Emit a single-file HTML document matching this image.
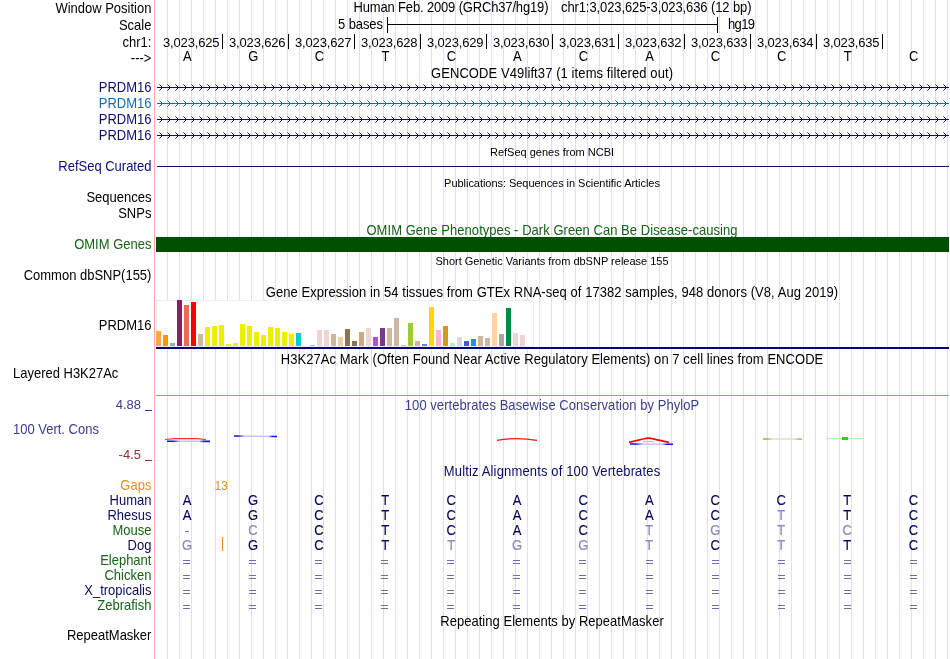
<!DOCTYPE html>
<html><head><meta charset="utf-8"><style>
html,body{margin:0;padding:0;background:#fff;}
body{width:950px;height:659px;overflow:hidden;}
svg{display:block;font-family:"Liberation Sans",sans-serif;will-change:transform;}
</style></head><body>
<svg width="950" height="659" viewBox="0 0 950 659">
<rect x="0" y="0" width="950" height="659" fill="#fff"/>
<rect x="167" y="0" width="1" height="659" fill="#ddddff"/>
<rect x="179" y="0" width="1" height="659" fill="#ddddff"/>
<rect x="191" y="0" width="1" height="659" fill="#ddddff"/>
<rect x="203" y="0" width="1" height="659" fill="#ddddff"/>
<rect x="215" y="0" width="1" height="659" fill="#ddddff"/>
<rect x="227" y="0" width="1" height="659" fill="#ddddff"/>
<rect x="239" y="0" width="1" height="659" fill="#ddddff"/>
<rect x="251" y="0" width="1" height="659" fill="#ddddff"/>
<rect x="263" y="0" width="1" height="659" fill="#ddddff"/>
<rect x="275" y="0" width="1" height="659" fill="#ddddff"/>
<rect x="287" y="0" width="1" height="659" fill="#ddddff"/>
<rect x="299" y="0" width="1" height="659" fill="#ddddff"/>
<rect x="311" y="0" width="1" height="659" fill="#ddddff"/>
<rect x="323" y="0" width="1" height="659" fill="#ddddff"/>
<rect x="335" y="0" width="1" height="659" fill="#ddddff"/>
<rect x="347" y="0" width="1" height="659" fill="#ddddff"/>
<rect x="359" y="0" width="1" height="659" fill="#ddddff"/>
<rect x="371" y="0" width="1" height="659" fill="#ddddff"/>
<rect x="383" y="0" width="1" height="659" fill="#ddddff"/>
<rect x="395" y="0" width="1" height="659" fill="#ddddff"/>
<rect x="407" y="0" width="1" height="659" fill="#ddddff"/>
<rect x="419" y="0" width="1" height="659" fill="#ddddff"/>
<rect x="431" y="0" width="1" height="659" fill="#ddddff"/>
<rect x="443" y="0" width="1" height="659" fill="#ddddff"/>
<rect x="455" y="0" width="1" height="659" fill="#ddddff"/>
<rect x="467" y="0" width="1" height="659" fill="#ddddff"/>
<rect x="479" y="0" width="1" height="659" fill="#ddddff"/>
<rect x="491" y="0" width="1" height="659" fill="#ddddff"/>
<rect x="503" y="0" width="1" height="659" fill="#ddddff"/>
<rect x="515" y="0" width="1" height="659" fill="#ddddff"/>
<rect x="527" y="0" width="1" height="659" fill="#ddddff"/>
<rect x="539" y="0" width="1" height="659" fill="#ddddff"/>
<rect x="551" y="0" width="1" height="659" fill="#ddddff"/>
<rect x="563" y="0" width="1" height="659" fill="#ddddff"/>
<rect x="575" y="0" width="1" height="659" fill="#ddddff"/>
<rect x="587" y="0" width="1" height="659" fill="#ddddff"/>
<rect x="599" y="0" width="1" height="659" fill="#ddddff"/>
<rect x="611" y="0" width="1" height="659" fill="#ddddff"/>
<rect x="623" y="0" width="1" height="659" fill="#ddddff"/>
<rect x="635" y="0" width="1" height="659" fill="#ddddff"/>
<rect x="647" y="0" width="1" height="659" fill="#ddddff"/>
<rect x="659" y="0" width="1" height="659" fill="#ddddff"/>
<rect x="671" y="0" width="1" height="659" fill="#ddddff"/>
<rect x="683" y="0" width="1" height="659" fill="#ddddff"/>
<rect x="695" y="0" width="1" height="659" fill="#ddddff"/>
<rect x="707" y="0" width="1" height="659" fill="#ddddff"/>
<rect x="719" y="0" width="1" height="659" fill="#ddddff"/>
<rect x="731" y="0" width="1" height="659" fill="#ddddff"/>
<rect x="743" y="0" width="1" height="659" fill="#ddddff"/>
<rect x="755" y="0" width="1" height="659" fill="#ddddff"/>
<rect x="767" y="0" width="1" height="659" fill="#ddddff"/>
<rect x="779" y="0" width="1" height="659" fill="#ddddff"/>
<rect x="791" y="0" width="1" height="659" fill="#ddddff"/>
<rect x="803" y="0" width="1" height="659" fill="#ddddff"/>
<rect x="815" y="0" width="1" height="659" fill="#ddddff"/>
<rect x="827" y="0" width="1" height="659" fill="#ddddff"/>
<rect x="839" y="0" width="1" height="659" fill="#ddddff"/>
<rect x="851" y="0" width="1" height="659" fill="#ddddff"/>
<rect x="863" y="0" width="1" height="659" fill="#ddddff"/>
<rect x="875" y="0" width="1" height="659" fill="#ddddff"/>
<rect x="887" y="0" width="1" height="659" fill="#ddddff"/>
<rect x="899" y="0" width="1" height="659" fill="#ddddff"/>
<rect x="911" y="0" width="1" height="659" fill="#ddddff"/>
<rect x="923" y="0" width="1" height="659" fill="#ddddff"/>
<rect x="935" y="0" width="1" height="659" fill="#ddddff"/>
<rect x="947" y="0" width="1" height="659" fill="#ddddff"/>
<rect x="154" y="0" width="1" height="659" fill="#ffaaaa"/>
<text transform="translate(151.4,13) scale(1,1.09)" text-anchor="end" font-size="13" fill="#000" xml:space="preserve">Window Position</text>
<text transform="translate(151.4,30) scale(1,1.09)" text-anchor="end" font-size="13" fill="#000" xml:space="preserve">Scale</text>
<text transform="translate(151.4,47) scale(1,1.09)" text-anchor="end" font-size="13" fill="#000" xml:space="preserve">chr1:</text>
<text transform="translate(151.4,63) scale(1,1.09)" text-anchor="end" font-size="13" fill="#000" xml:space="preserve">---&gt;</text>
<text transform="translate(353.5,12) scale(1,1.09)" text-anchor="start" font-size="13" fill="#000" textLength="195" lengthAdjust="spacing" xml:space="preserve">Human Feb. 2009 (GRCh37/hg19)</text>
<text transform="translate(561,12) scale(1,1.09)" text-anchor="start" font-size="13" fill="#000" textLength="190.5" lengthAdjust="spacing" xml:space="preserve">chr1:3,023,625-3,023,636 (12 bp)</text>
<text transform="translate(338,29) scale(1,1.09)" text-anchor="start" font-size="13" fill="#000" textLength="45" lengthAdjust="spacing" xml:space="preserve">5 bases</text>
<rect x="387" y="24" width="331" height="1" fill="#000"/>
<rect x="387" y="17" width="1" height="16" fill="#000"/>
<rect x="717" y="17" width="1" height="16" fill="#000"/>
<text transform="translate(728,29) scale(1,1.09)" text-anchor="start" font-size="13" fill="#000" textLength="27" lengthAdjust="spacing" xml:space="preserve">hg19</text>
<rect x="222" y="34" width="1" height="15" fill="#000"/>
<text transform="translate(219.5,47) scale(1,1.0)" text-anchor="end" font-size="13" fill="#000" textLength="56.5" lengthAdjust="spacing" xml:space="preserve">3,023,625</text>
<text transform="translate(187.3,61) scale(1,1.09)" text-anchor="middle" font-size="13" fill="#000" xml:space="preserve">A</text>
<rect x="288" y="34" width="1" height="15" fill="#000"/>
<text transform="translate(285.5,47) scale(1,1.0)" text-anchor="end" font-size="13" fill="#000" textLength="56.5" lengthAdjust="spacing" xml:space="preserve">3,023,626</text>
<text transform="translate(253.33,61) scale(1,1.09)" text-anchor="middle" font-size="13" fill="#000" xml:space="preserve">G</text>
<rect x="354" y="34" width="1" height="15" fill="#000"/>
<text transform="translate(351.5,47) scale(1,1.0)" text-anchor="end" font-size="13" fill="#000" textLength="56.5" lengthAdjust="spacing" xml:space="preserve">3,023,627</text>
<text transform="translate(319.36,61) scale(1,1.09)" text-anchor="middle" font-size="13" fill="#000" xml:space="preserve">C</text>
<rect x="420" y="34" width="1" height="15" fill="#000"/>
<text transform="translate(417.5,47) scale(1,1.0)" text-anchor="end" font-size="13" fill="#000" textLength="56.5" lengthAdjust="spacing" xml:space="preserve">3,023,628</text>
<text transform="translate(385.39,61) scale(1,1.09)" text-anchor="middle" font-size="13" fill="#000" xml:space="preserve">T</text>
<rect x="486" y="34" width="1" height="15" fill="#000"/>
<text transform="translate(483.5,47) scale(1,1.0)" text-anchor="end" font-size="13" fill="#000" textLength="56.5" lengthAdjust="spacing" xml:space="preserve">3,023,629</text>
<text transform="translate(451.42,61) scale(1,1.09)" text-anchor="middle" font-size="13" fill="#000" xml:space="preserve">C</text>
<rect x="552" y="34" width="1" height="15" fill="#000"/>
<text transform="translate(549.5,47) scale(1,1.0)" text-anchor="end" font-size="13" fill="#000" textLength="56.5" lengthAdjust="spacing" xml:space="preserve">3,023,630</text>
<text transform="translate(517.45,61) scale(1,1.09)" text-anchor="middle" font-size="13" fill="#000" xml:space="preserve">A</text>
<rect x="618" y="34" width="1" height="15" fill="#000"/>
<text transform="translate(615.5,47) scale(1,1.0)" text-anchor="end" font-size="13" fill="#000" textLength="56.5" lengthAdjust="spacing" xml:space="preserve">3,023,631</text>
<text transform="translate(583.48,61) scale(1,1.09)" text-anchor="middle" font-size="13" fill="#000" xml:space="preserve">C</text>
<rect x="684" y="34" width="1" height="15" fill="#000"/>
<text transform="translate(681.5,47) scale(1,1.0)" text-anchor="end" font-size="13" fill="#000" textLength="56.5" lengthAdjust="spacing" xml:space="preserve">3,023,632</text>
<text transform="translate(649.51,61) scale(1,1.09)" text-anchor="middle" font-size="13" fill="#000" xml:space="preserve">A</text>
<rect x="750" y="34" width="1" height="15" fill="#000"/>
<text transform="translate(747.5,47) scale(1,1.0)" text-anchor="end" font-size="13" fill="#000" textLength="56.5" lengthAdjust="spacing" xml:space="preserve">3,023,633</text>
<text transform="translate(715.54,61) scale(1,1.09)" text-anchor="middle" font-size="13" fill="#000" xml:space="preserve">C</text>
<rect x="816" y="34" width="1" height="15" fill="#000"/>
<text transform="translate(813.5,47) scale(1,1.0)" text-anchor="end" font-size="13" fill="#000" textLength="56.5" lengthAdjust="spacing" xml:space="preserve">3,023,634</text>
<text transform="translate(781.5699999999999,61) scale(1,1.09)" text-anchor="middle" font-size="13" fill="#000" xml:space="preserve">C</text>
<rect x="882" y="34" width="1" height="15" fill="#000"/>
<text transform="translate(879.5,47) scale(1,1.0)" text-anchor="end" font-size="13" fill="#000" textLength="56.5" lengthAdjust="spacing" xml:space="preserve">3,023,635</text>
<text transform="translate(847.5999999999999,61) scale(1,1.09)" text-anchor="middle" font-size="13" fill="#000" xml:space="preserve">T</text>
<text transform="translate(913.6300000000001,61) scale(1,1.09)" text-anchor="middle" font-size="13" fill="#000" xml:space="preserve">C</text>
<text transform="translate(552,78) scale(1,1.09)" text-anchor="middle" font-size="13" fill="#000" textLength="242.1" lengthAdjust="spacing" xml:space="preserve">GENCODE V49lift37 (1 items filtered out)</text>
<text transform="translate(151.4,92) scale(1,1.09)" text-anchor="end" font-size="13" fill="#0c0c78" xml:space="preserve">PRDM16</text>
<rect x="157" y="87" width="792" height="1" fill="#0c0c78"/>
<path d="M160,85h1v1h-1zM161,86h1v3h-1zM160,89h1v1h-1zM168,85h1v1h-1zM169,86h1v3h-1zM168,89h1v1h-1zM176,85h1v1h-1zM177,86h1v3h-1zM176,89h1v1h-1zM184,85h1v1h-1zM185,86h1v3h-1zM184,89h1v1h-1zM192,85h1v1h-1zM193,86h1v3h-1zM192,89h1v1h-1zM200,85h1v1h-1zM201,86h1v3h-1zM200,89h1v1h-1zM208,85h1v1h-1zM209,86h1v3h-1zM208,89h1v1h-1zM216,85h1v1h-1zM217,86h1v3h-1zM216,89h1v1h-1zM224,85h1v1h-1zM225,86h1v3h-1zM224,89h1v1h-1zM232,85h1v1h-1zM233,86h1v3h-1zM232,89h1v1h-1zM240,85h1v1h-1zM241,86h1v3h-1zM240,89h1v1h-1zM248,85h1v1h-1zM249,86h1v3h-1zM248,89h1v1h-1zM256,85h1v1h-1zM257,86h1v3h-1zM256,89h1v1h-1zM264,85h1v1h-1zM265,86h1v3h-1zM264,89h1v1h-1zM272,85h1v1h-1zM273,86h1v3h-1zM272,89h1v1h-1zM280,85h1v1h-1zM281,86h1v3h-1zM280,89h1v1h-1zM288,85h1v1h-1zM289,86h1v3h-1zM288,89h1v1h-1zM296,85h1v1h-1zM297,86h1v3h-1zM296,89h1v1h-1zM304,85h1v1h-1zM305,86h1v3h-1zM304,89h1v1h-1zM312,85h1v1h-1zM313,86h1v3h-1zM312,89h1v1h-1zM320,85h1v1h-1zM321,86h1v3h-1zM320,89h1v1h-1zM328,85h1v1h-1zM329,86h1v3h-1zM328,89h1v1h-1zM336,85h1v1h-1zM337,86h1v3h-1zM336,89h1v1h-1zM344,85h1v1h-1zM345,86h1v3h-1zM344,89h1v1h-1zM352,85h1v1h-1zM353,86h1v3h-1zM352,89h1v1h-1zM360,85h1v1h-1zM361,86h1v3h-1zM360,89h1v1h-1zM368,85h1v1h-1zM369,86h1v3h-1zM368,89h1v1h-1zM376,85h1v1h-1zM377,86h1v3h-1zM376,89h1v1h-1zM384,85h1v1h-1zM385,86h1v3h-1zM384,89h1v1h-1zM392,85h1v1h-1zM393,86h1v3h-1zM392,89h1v1h-1zM400,85h1v1h-1zM401,86h1v3h-1zM400,89h1v1h-1zM408,85h1v1h-1zM409,86h1v3h-1zM408,89h1v1h-1zM416,85h1v1h-1zM417,86h1v3h-1zM416,89h1v1h-1zM424,85h1v1h-1zM425,86h1v3h-1zM424,89h1v1h-1zM432,85h1v1h-1zM433,86h1v3h-1zM432,89h1v1h-1zM440,85h1v1h-1zM441,86h1v3h-1zM440,89h1v1h-1zM448,85h1v1h-1zM449,86h1v3h-1zM448,89h1v1h-1zM456,85h1v1h-1zM457,86h1v3h-1zM456,89h1v1h-1zM464,85h1v1h-1zM465,86h1v3h-1zM464,89h1v1h-1zM472,85h1v1h-1zM473,86h1v3h-1zM472,89h1v1h-1zM480,85h1v1h-1zM481,86h1v3h-1zM480,89h1v1h-1zM488,85h1v1h-1zM489,86h1v3h-1zM488,89h1v1h-1zM496,85h1v1h-1zM497,86h1v3h-1zM496,89h1v1h-1zM504,85h1v1h-1zM505,86h1v3h-1zM504,89h1v1h-1zM512,85h1v1h-1zM513,86h1v3h-1zM512,89h1v1h-1zM520,85h1v1h-1zM521,86h1v3h-1zM520,89h1v1h-1zM528,85h1v1h-1zM529,86h1v3h-1zM528,89h1v1h-1zM536,85h1v1h-1zM537,86h1v3h-1zM536,89h1v1h-1zM544,85h1v1h-1zM545,86h1v3h-1zM544,89h1v1h-1zM552,85h1v1h-1zM553,86h1v3h-1zM552,89h1v1h-1zM560,85h1v1h-1zM561,86h1v3h-1zM560,89h1v1h-1zM568,85h1v1h-1zM569,86h1v3h-1zM568,89h1v1h-1zM576,85h1v1h-1zM577,86h1v3h-1zM576,89h1v1h-1zM584,85h1v1h-1zM585,86h1v3h-1zM584,89h1v1h-1zM592,85h1v1h-1zM593,86h1v3h-1zM592,89h1v1h-1zM600,85h1v1h-1zM601,86h1v3h-1zM600,89h1v1h-1zM608,85h1v1h-1zM609,86h1v3h-1zM608,89h1v1h-1zM616,85h1v1h-1zM617,86h1v3h-1zM616,89h1v1h-1zM624,85h1v1h-1zM625,86h1v3h-1zM624,89h1v1h-1zM632,85h1v1h-1zM633,86h1v3h-1zM632,89h1v1h-1zM640,85h1v1h-1zM641,86h1v3h-1zM640,89h1v1h-1zM648,85h1v1h-1zM649,86h1v3h-1zM648,89h1v1h-1zM656,85h1v1h-1zM657,86h1v3h-1zM656,89h1v1h-1zM664,85h1v1h-1zM665,86h1v3h-1zM664,89h1v1h-1zM672,85h1v1h-1zM673,86h1v3h-1zM672,89h1v1h-1zM680,85h1v1h-1zM681,86h1v3h-1zM680,89h1v1h-1zM688,85h1v1h-1zM689,86h1v3h-1zM688,89h1v1h-1zM696,85h1v1h-1zM697,86h1v3h-1zM696,89h1v1h-1zM704,85h1v1h-1zM705,86h1v3h-1zM704,89h1v1h-1zM712,85h1v1h-1zM713,86h1v3h-1zM712,89h1v1h-1zM720,85h1v1h-1zM721,86h1v3h-1zM720,89h1v1h-1zM728,85h1v1h-1zM729,86h1v3h-1zM728,89h1v1h-1zM736,85h1v1h-1zM737,86h1v3h-1zM736,89h1v1h-1zM744,85h1v1h-1zM745,86h1v3h-1zM744,89h1v1h-1zM752,85h1v1h-1zM753,86h1v3h-1zM752,89h1v1h-1zM760,85h1v1h-1zM761,86h1v3h-1zM760,89h1v1h-1zM768,85h1v1h-1zM769,86h1v3h-1zM768,89h1v1h-1zM776,85h1v1h-1zM777,86h1v3h-1zM776,89h1v1h-1zM784,85h1v1h-1zM785,86h1v3h-1zM784,89h1v1h-1zM792,85h1v1h-1zM793,86h1v3h-1zM792,89h1v1h-1zM800,85h1v1h-1zM801,86h1v3h-1zM800,89h1v1h-1zM808,85h1v1h-1zM809,86h1v3h-1zM808,89h1v1h-1zM816,85h1v1h-1zM817,86h1v3h-1zM816,89h1v1h-1zM824,85h1v1h-1zM825,86h1v3h-1zM824,89h1v1h-1zM832,85h1v1h-1zM833,86h1v3h-1zM832,89h1v1h-1zM840,85h1v1h-1zM841,86h1v3h-1zM840,89h1v1h-1zM848,85h1v1h-1zM849,86h1v3h-1zM848,89h1v1h-1zM856,85h1v1h-1zM857,86h1v3h-1zM856,89h1v1h-1zM864,85h1v1h-1zM865,86h1v3h-1zM864,89h1v1h-1zM872,85h1v1h-1zM873,86h1v3h-1zM872,89h1v1h-1zM880,85h1v1h-1zM881,86h1v3h-1zM880,89h1v1h-1zM888,85h1v1h-1zM889,86h1v3h-1zM888,89h1v1h-1zM896,85h1v1h-1zM897,86h1v3h-1zM896,89h1v1h-1zM904,85h1v1h-1zM905,86h1v3h-1zM904,89h1v1h-1zM912,85h1v1h-1zM913,86h1v3h-1zM912,89h1v1h-1zM920,85h1v1h-1zM921,86h1v3h-1zM920,89h1v1h-1zM928,85h1v1h-1zM929,86h1v3h-1zM928,89h1v1h-1zM936,85h1v1h-1zM937,86h1v3h-1zM936,89h1v1h-1zM944,85h1v1h-1zM945,86h1v3h-1zM944,89h1v1h-1z" fill="#0c0c78"/>
<path d="M159,84h1v1h-1zM159,90h1v1h-1zM167,84h1v1h-1zM167,90h1v1h-1zM175,84h1v1h-1zM175,90h1v1h-1zM183,84h1v1h-1zM183,90h1v1h-1zM191,84h1v1h-1zM191,90h1v1h-1zM199,84h1v1h-1zM199,90h1v1h-1zM207,84h1v1h-1zM207,90h1v1h-1zM215,84h1v1h-1zM215,90h1v1h-1zM223,84h1v1h-1zM223,90h1v1h-1zM231,84h1v1h-1zM231,90h1v1h-1zM239,84h1v1h-1zM239,90h1v1h-1zM247,84h1v1h-1zM247,90h1v1h-1zM255,84h1v1h-1zM255,90h1v1h-1zM263,84h1v1h-1zM263,90h1v1h-1zM271,84h1v1h-1zM271,90h1v1h-1zM279,84h1v1h-1zM279,90h1v1h-1zM287,84h1v1h-1zM287,90h1v1h-1zM295,84h1v1h-1zM295,90h1v1h-1zM303,84h1v1h-1zM303,90h1v1h-1zM311,84h1v1h-1zM311,90h1v1h-1zM319,84h1v1h-1zM319,90h1v1h-1zM327,84h1v1h-1zM327,90h1v1h-1zM335,84h1v1h-1zM335,90h1v1h-1zM343,84h1v1h-1zM343,90h1v1h-1zM351,84h1v1h-1zM351,90h1v1h-1zM359,84h1v1h-1zM359,90h1v1h-1zM367,84h1v1h-1zM367,90h1v1h-1zM375,84h1v1h-1zM375,90h1v1h-1zM383,84h1v1h-1zM383,90h1v1h-1zM391,84h1v1h-1zM391,90h1v1h-1zM399,84h1v1h-1zM399,90h1v1h-1zM407,84h1v1h-1zM407,90h1v1h-1zM415,84h1v1h-1zM415,90h1v1h-1zM423,84h1v1h-1zM423,90h1v1h-1zM431,84h1v1h-1zM431,90h1v1h-1zM439,84h1v1h-1zM439,90h1v1h-1zM447,84h1v1h-1zM447,90h1v1h-1zM455,84h1v1h-1zM455,90h1v1h-1zM463,84h1v1h-1zM463,90h1v1h-1zM471,84h1v1h-1zM471,90h1v1h-1zM479,84h1v1h-1zM479,90h1v1h-1zM487,84h1v1h-1zM487,90h1v1h-1zM495,84h1v1h-1zM495,90h1v1h-1zM503,84h1v1h-1zM503,90h1v1h-1zM511,84h1v1h-1zM511,90h1v1h-1zM519,84h1v1h-1zM519,90h1v1h-1zM527,84h1v1h-1zM527,90h1v1h-1zM535,84h1v1h-1zM535,90h1v1h-1zM543,84h1v1h-1zM543,90h1v1h-1zM551,84h1v1h-1zM551,90h1v1h-1zM559,84h1v1h-1zM559,90h1v1h-1zM567,84h1v1h-1zM567,90h1v1h-1zM575,84h1v1h-1zM575,90h1v1h-1zM583,84h1v1h-1zM583,90h1v1h-1zM591,84h1v1h-1zM591,90h1v1h-1zM599,84h1v1h-1zM599,90h1v1h-1zM607,84h1v1h-1zM607,90h1v1h-1zM615,84h1v1h-1zM615,90h1v1h-1zM623,84h1v1h-1zM623,90h1v1h-1zM631,84h1v1h-1zM631,90h1v1h-1zM639,84h1v1h-1zM639,90h1v1h-1zM647,84h1v1h-1zM647,90h1v1h-1zM655,84h1v1h-1zM655,90h1v1h-1zM663,84h1v1h-1zM663,90h1v1h-1zM671,84h1v1h-1zM671,90h1v1h-1zM679,84h1v1h-1zM679,90h1v1h-1zM687,84h1v1h-1zM687,90h1v1h-1zM695,84h1v1h-1zM695,90h1v1h-1zM703,84h1v1h-1zM703,90h1v1h-1zM711,84h1v1h-1zM711,90h1v1h-1zM719,84h1v1h-1zM719,90h1v1h-1zM727,84h1v1h-1zM727,90h1v1h-1zM735,84h1v1h-1zM735,90h1v1h-1zM743,84h1v1h-1zM743,90h1v1h-1zM751,84h1v1h-1zM751,90h1v1h-1zM759,84h1v1h-1zM759,90h1v1h-1zM767,84h1v1h-1zM767,90h1v1h-1zM775,84h1v1h-1zM775,90h1v1h-1zM783,84h1v1h-1zM783,90h1v1h-1zM791,84h1v1h-1zM791,90h1v1h-1zM799,84h1v1h-1zM799,90h1v1h-1zM807,84h1v1h-1zM807,90h1v1h-1zM815,84h1v1h-1zM815,90h1v1h-1zM823,84h1v1h-1zM823,90h1v1h-1zM831,84h1v1h-1zM831,90h1v1h-1zM839,84h1v1h-1zM839,90h1v1h-1zM847,84h1v1h-1zM847,90h1v1h-1zM855,84h1v1h-1zM855,90h1v1h-1zM863,84h1v1h-1zM863,90h1v1h-1zM871,84h1v1h-1zM871,90h1v1h-1zM879,84h1v1h-1zM879,90h1v1h-1zM887,84h1v1h-1zM887,90h1v1h-1zM895,84h1v1h-1zM895,90h1v1h-1zM903,84h1v1h-1zM903,90h1v1h-1zM911,84h1v1h-1zM911,90h1v1h-1zM919,84h1v1h-1zM919,90h1v1h-1zM927,84h1v1h-1zM927,90h1v1h-1zM935,84h1v1h-1zM935,90h1v1h-1zM943,84h1v1h-1zM943,90h1v1h-1z" fill="#0c0c78" fill-opacity="0.6"/>
<text transform="translate(151.4,108) scale(1,1.09)" text-anchor="end" font-size="13" fill="#0c6eb4" xml:space="preserve">PRDM16</text>
<rect x="157" y="103" width="792" height="1" fill="#0c6eb4"/>
<path d="M160,101h1v1h-1zM161,102h1v3h-1zM160,105h1v1h-1zM168,101h1v1h-1zM169,102h1v3h-1zM168,105h1v1h-1zM176,101h1v1h-1zM177,102h1v3h-1zM176,105h1v1h-1zM184,101h1v1h-1zM185,102h1v3h-1zM184,105h1v1h-1zM192,101h1v1h-1zM193,102h1v3h-1zM192,105h1v1h-1zM200,101h1v1h-1zM201,102h1v3h-1zM200,105h1v1h-1zM208,101h1v1h-1zM209,102h1v3h-1zM208,105h1v1h-1zM216,101h1v1h-1zM217,102h1v3h-1zM216,105h1v1h-1zM224,101h1v1h-1zM225,102h1v3h-1zM224,105h1v1h-1zM232,101h1v1h-1zM233,102h1v3h-1zM232,105h1v1h-1zM240,101h1v1h-1zM241,102h1v3h-1zM240,105h1v1h-1zM248,101h1v1h-1zM249,102h1v3h-1zM248,105h1v1h-1zM256,101h1v1h-1zM257,102h1v3h-1zM256,105h1v1h-1zM264,101h1v1h-1zM265,102h1v3h-1zM264,105h1v1h-1zM272,101h1v1h-1zM273,102h1v3h-1zM272,105h1v1h-1zM280,101h1v1h-1zM281,102h1v3h-1zM280,105h1v1h-1zM288,101h1v1h-1zM289,102h1v3h-1zM288,105h1v1h-1zM296,101h1v1h-1zM297,102h1v3h-1zM296,105h1v1h-1zM304,101h1v1h-1zM305,102h1v3h-1zM304,105h1v1h-1zM312,101h1v1h-1zM313,102h1v3h-1zM312,105h1v1h-1zM320,101h1v1h-1zM321,102h1v3h-1zM320,105h1v1h-1zM328,101h1v1h-1zM329,102h1v3h-1zM328,105h1v1h-1zM336,101h1v1h-1zM337,102h1v3h-1zM336,105h1v1h-1zM344,101h1v1h-1zM345,102h1v3h-1zM344,105h1v1h-1zM352,101h1v1h-1zM353,102h1v3h-1zM352,105h1v1h-1zM360,101h1v1h-1zM361,102h1v3h-1zM360,105h1v1h-1zM368,101h1v1h-1zM369,102h1v3h-1zM368,105h1v1h-1zM376,101h1v1h-1zM377,102h1v3h-1zM376,105h1v1h-1zM384,101h1v1h-1zM385,102h1v3h-1zM384,105h1v1h-1zM392,101h1v1h-1zM393,102h1v3h-1zM392,105h1v1h-1zM400,101h1v1h-1zM401,102h1v3h-1zM400,105h1v1h-1zM408,101h1v1h-1zM409,102h1v3h-1zM408,105h1v1h-1zM416,101h1v1h-1zM417,102h1v3h-1zM416,105h1v1h-1zM424,101h1v1h-1zM425,102h1v3h-1zM424,105h1v1h-1zM432,101h1v1h-1zM433,102h1v3h-1zM432,105h1v1h-1zM440,101h1v1h-1zM441,102h1v3h-1zM440,105h1v1h-1zM448,101h1v1h-1zM449,102h1v3h-1zM448,105h1v1h-1zM456,101h1v1h-1zM457,102h1v3h-1zM456,105h1v1h-1zM464,101h1v1h-1zM465,102h1v3h-1zM464,105h1v1h-1zM472,101h1v1h-1zM473,102h1v3h-1zM472,105h1v1h-1zM480,101h1v1h-1zM481,102h1v3h-1zM480,105h1v1h-1zM488,101h1v1h-1zM489,102h1v3h-1zM488,105h1v1h-1zM496,101h1v1h-1zM497,102h1v3h-1zM496,105h1v1h-1zM504,101h1v1h-1zM505,102h1v3h-1zM504,105h1v1h-1zM512,101h1v1h-1zM513,102h1v3h-1zM512,105h1v1h-1zM520,101h1v1h-1zM521,102h1v3h-1zM520,105h1v1h-1zM528,101h1v1h-1zM529,102h1v3h-1zM528,105h1v1h-1zM536,101h1v1h-1zM537,102h1v3h-1zM536,105h1v1h-1zM544,101h1v1h-1zM545,102h1v3h-1zM544,105h1v1h-1zM552,101h1v1h-1zM553,102h1v3h-1zM552,105h1v1h-1zM560,101h1v1h-1zM561,102h1v3h-1zM560,105h1v1h-1zM568,101h1v1h-1zM569,102h1v3h-1zM568,105h1v1h-1zM576,101h1v1h-1zM577,102h1v3h-1zM576,105h1v1h-1zM584,101h1v1h-1zM585,102h1v3h-1zM584,105h1v1h-1zM592,101h1v1h-1zM593,102h1v3h-1zM592,105h1v1h-1zM600,101h1v1h-1zM601,102h1v3h-1zM600,105h1v1h-1zM608,101h1v1h-1zM609,102h1v3h-1zM608,105h1v1h-1zM616,101h1v1h-1zM617,102h1v3h-1zM616,105h1v1h-1zM624,101h1v1h-1zM625,102h1v3h-1zM624,105h1v1h-1zM632,101h1v1h-1zM633,102h1v3h-1zM632,105h1v1h-1zM640,101h1v1h-1zM641,102h1v3h-1zM640,105h1v1h-1zM648,101h1v1h-1zM649,102h1v3h-1zM648,105h1v1h-1zM656,101h1v1h-1zM657,102h1v3h-1zM656,105h1v1h-1zM664,101h1v1h-1zM665,102h1v3h-1zM664,105h1v1h-1zM672,101h1v1h-1zM673,102h1v3h-1zM672,105h1v1h-1zM680,101h1v1h-1zM681,102h1v3h-1zM680,105h1v1h-1zM688,101h1v1h-1zM689,102h1v3h-1zM688,105h1v1h-1zM696,101h1v1h-1zM697,102h1v3h-1zM696,105h1v1h-1zM704,101h1v1h-1zM705,102h1v3h-1zM704,105h1v1h-1zM712,101h1v1h-1zM713,102h1v3h-1zM712,105h1v1h-1zM720,101h1v1h-1zM721,102h1v3h-1zM720,105h1v1h-1zM728,101h1v1h-1zM729,102h1v3h-1zM728,105h1v1h-1zM736,101h1v1h-1zM737,102h1v3h-1zM736,105h1v1h-1zM744,101h1v1h-1zM745,102h1v3h-1zM744,105h1v1h-1zM752,101h1v1h-1zM753,102h1v3h-1zM752,105h1v1h-1zM760,101h1v1h-1zM761,102h1v3h-1zM760,105h1v1h-1zM768,101h1v1h-1zM769,102h1v3h-1zM768,105h1v1h-1zM776,101h1v1h-1zM777,102h1v3h-1zM776,105h1v1h-1zM784,101h1v1h-1zM785,102h1v3h-1zM784,105h1v1h-1zM792,101h1v1h-1zM793,102h1v3h-1zM792,105h1v1h-1zM800,101h1v1h-1zM801,102h1v3h-1zM800,105h1v1h-1zM808,101h1v1h-1zM809,102h1v3h-1zM808,105h1v1h-1zM816,101h1v1h-1zM817,102h1v3h-1zM816,105h1v1h-1zM824,101h1v1h-1zM825,102h1v3h-1zM824,105h1v1h-1zM832,101h1v1h-1zM833,102h1v3h-1zM832,105h1v1h-1zM840,101h1v1h-1zM841,102h1v3h-1zM840,105h1v1h-1zM848,101h1v1h-1zM849,102h1v3h-1zM848,105h1v1h-1zM856,101h1v1h-1zM857,102h1v3h-1zM856,105h1v1h-1zM864,101h1v1h-1zM865,102h1v3h-1zM864,105h1v1h-1zM872,101h1v1h-1zM873,102h1v3h-1zM872,105h1v1h-1zM880,101h1v1h-1zM881,102h1v3h-1zM880,105h1v1h-1zM888,101h1v1h-1zM889,102h1v3h-1zM888,105h1v1h-1zM896,101h1v1h-1zM897,102h1v3h-1zM896,105h1v1h-1zM904,101h1v1h-1zM905,102h1v3h-1zM904,105h1v1h-1zM912,101h1v1h-1zM913,102h1v3h-1zM912,105h1v1h-1zM920,101h1v1h-1zM921,102h1v3h-1zM920,105h1v1h-1zM928,101h1v1h-1zM929,102h1v3h-1zM928,105h1v1h-1zM936,101h1v1h-1zM937,102h1v3h-1zM936,105h1v1h-1zM944,101h1v1h-1zM945,102h1v3h-1zM944,105h1v1h-1z" fill="#0c6eb4"/>
<path d="M159,100h1v1h-1zM159,106h1v1h-1zM167,100h1v1h-1zM167,106h1v1h-1zM175,100h1v1h-1zM175,106h1v1h-1zM183,100h1v1h-1zM183,106h1v1h-1zM191,100h1v1h-1zM191,106h1v1h-1zM199,100h1v1h-1zM199,106h1v1h-1zM207,100h1v1h-1zM207,106h1v1h-1zM215,100h1v1h-1zM215,106h1v1h-1zM223,100h1v1h-1zM223,106h1v1h-1zM231,100h1v1h-1zM231,106h1v1h-1zM239,100h1v1h-1zM239,106h1v1h-1zM247,100h1v1h-1zM247,106h1v1h-1zM255,100h1v1h-1zM255,106h1v1h-1zM263,100h1v1h-1zM263,106h1v1h-1zM271,100h1v1h-1zM271,106h1v1h-1zM279,100h1v1h-1zM279,106h1v1h-1zM287,100h1v1h-1zM287,106h1v1h-1zM295,100h1v1h-1zM295,106h1v1h-1zM303,100h1v1h-1zM303,106h1v1h-1zM311,100h1v1h-1zM311,106h1v1h-1zM319,100h1v1h-1zM319,106h1v1h-1zM327,100h1v1h-1zM327,106h1v1h-1zM335,100h1v1h-1zM335,106h1v1h-1zM343,100h1v1h-1zM343,106h1v1h-1zM351,100h1v1h-1zM351,106h1v1h-1zM359,100h1v1h-1zM359,106h1v1h-1zM367,100h1v1h-1zM367,106h1v1h-1zM375,100h1v1h-1zM375,106h1v1h-1zM383,100h1v1h-1zM383,106h1v1h-1zM391,100h1v1h-1zM391,106h1v1h-1zM399,100h1v1h-1zM399,106h1v1h-1zM407,100h1v1h-1zM407,106h1v1h-1zM415,100h1v1h-1zM415,106h1v1h-1zM423,100h1v1h-1zM423,106h1v1h-1zM431,100h1v1h-1zM431,106h1v1h-1zM439,100h1v1h-1zM439,106h1v1h-1zM447,100h1v1h-1zM447,106h1v1h-1zM455,100h1v1h-1zM455,106h1v1h-1zM463,100h1v1h-1zM463,106h1v1h-1zM471,100h1v1h-1zM471,106h1v1h-1zM479,100h1v1h-1zM479,106h1v1h-1zM487,100h1v1h-1zM487,106h1v1h-1zM495,100h1v1h-1zM495,106h1v1h-1zM503,100h1v1h-1zM503,106h1v1h-1zM511,100h1v1h-1zM511,106h1v1h-1zM519,100h1v1h-1zM519,106h1v1h-1zM527,100h1v1h-1zM527,106h1v1h-1zM535,100h1v1h-1zM535,106h1v1h-1zM543,100h1v1h-1zM543,106h1v1h-1zM551,100h1v1h-1zM551,106h1v1h-1zM559,100h1v1h-1zM559,106h1v1h-1zM567,100h1v1h-1zM567,106h1v1h-1zM575,100h1v1h-1zM575,106h1v1h-1zM583,100h1v1h-1zM583,106h1v1h-1zM591,100h1v1h-1zM591,106h1v1h-1zM599,100h1v1h-1zM599,106h1v1h-1zM607,100h1v1h-1zM607,106h1v1h-1zM615,100h1v1h-1zM615,106h1v1h-1zM623,100h1v1h-1zM623,106h1v1h-1zM631,100h1v1h-1zM631,106h1v1h-1zM639,100h1v1h-1zM639,106h1v1h-1zM647,100h1v1h-1zM647,106h1v1h-1zM655,100h1v1h-1zM655,106h1v1h-1zM663,100h1v1h-1zM663,106h1v1h-1zM671,100h1v1h-1zM671,106h1v1h-1zM679,100h1v1h-1zM679,106h1v1h-1zM687,100h1v1h-1zM687,106h1v1h-1zM695,100h1v1h-1zM695,106h1v1h-1zM703,100h1v1h-1zM703,106h1v1h-1zM711,100h1v1h-1zM711,106h1v1h-1zM719,100h1v1h-1zM719,106h1v1h-1zM727,100h1v1h-1zM727,106h1v1h-1zM735,100h1v1h-1zM735,106h1v1h-1zM743,100h1v1h-1zM743,106h1v1h-1zM751,100h1v1h-1zM751,106h1v1h-1zM759,100h1v1h-1zM759,106h1v1h-1zM767,100h1v1h-1zM767,106h1v1h-1zM775,100h1v1h-1zM775,106h1v1h-1zM783,100h1v1h-1zM783,106h1v1h-1zM791,100h1v1h-1zM791,106h1v1h-1zM799,100h1v1h-1zM799,106h1v1h-1zM807,100h1v1h-1zM807,106h1v1h-1zM815,100h1v1h-1zM815,106h1v1h-1zM823,100h1v1h-1zM823,106h1v1h-1zM831,100h1v1h-1zM831,106h1v1h-1zM839,100h1v1h-1zM839,106h1v1h-1zM847,100h1v1h-1zM847,106h1v1h-1zM855,100h1v1h-1zM855,106h1v1h-1zM863,100h1v1h-1zM863,106h1v1h-1zM871,100h1v1h-1zM871,106h1v1h-1zM879,100h1v1h-1zM879,106h1v1h-1zM887,100h1v1h-1zM887,106h1v1h-1zM895,100h1v1h-1zM895,106h1v1h-1zM903,100h1v1h-1zM903,106h1v1h-1zM911,100h1v1h-1zM911,106h1v1h-1zM919,100h1v1h-1zM919,106h1v1h-1zM927,100h1v1h-1zM927,106h1v1h-1zM935,100h1v1h-1zM935,106h1v1h-1zM943,100h1v1h-1zM943,106h1v1h-1z" fill="#0c6eb4" fill-opacity="0.6"/>
<text transform="translate(151.4,124) scale(1,1.09)" text-anchor="end" font-size="13" fill="#0c0c78" xml:space="preserve">PRDM16</text>
<rect x="157" y="119" width="792" height="1" fill="#0c0c78"/>
<path d="M160,117h1v1h-1zM161,118h1v3h-1zM160,121h1v1h-1zM168,117h1v1h-1zM169,118h1v3h-1zM168,121h1v1h-1zM176,117h1v1h-1zM177,118h1v3h-1zM176,121h1v1h-1zM184,117h1v1h-1zM185,118h1v3h-1zM184,121h1v1h-1zM192,117h1v1h-1zM193,118h1v3h-1zM192,121h1v1h-1zM200,117h1v1h-1zM201,118h1v3h-1zM200,121h1v1h-1zM208,117h1v1h-1zM209,118h1v3h-1zM208,121h1v1h-1zM216,117h1v1h-1zM217,118h1v3h-1zM216,121h1v1h-1zM224,117h1v1h-1zM225,118h1v3h-1zM224,121h1v1h-1zM232,117h1v1h-1zM233,118h1v3h-1zM232,121h1v1h-1zM240,117h1v1h-1zM241,118h1v3h-1zM240,121h1v1h-1zM248,117h1v1h-1zM249,118h1v3h-1zM248,121h1v1h-1zM256,117h1v1h-1zM257,118h1v3h-1zM256,121h1v1h-1zM264,117h1v1h-1zM265,118h1v3h-1zM264,121h1v1h-1zM272,117h1v1h-1zM273,118h1v3h-1zM272,121h1v1h-1zM280,117h1v1h-1zM281,118h1v3h-1zM280,121h1v1h-1zM288,117h1v1h-1zM289,118h1v3h-1zM288,121h1v1h-1zM296,117h1v1h-1zM297,118h1v3h-1zM296,121h1v1h-1zM304,117h1v1h-1zM305,118h1v3h-1zM304,121h1v1h-1zM312,117h1v1h-1zM313,118h1v3h-1zM312,121h1v1h-1zM320,117h1v1h-1zM321,118h1v3h-1zM320,121h1v1h-1zM328,117h1v1h-1zM329,118h1v3h-1zM328,121h1v1h-1zM336,117h1v1h-1zM337,118h1v3h-1zM336,121h1v1h-1zM344,117h1v1h-1zM345,118h1v3h-1zM344,121h1v1h-1zM352,117h1v1h-1zM353,118h1v3h-1zM352,121h1v1h-1zM360,117h1v1h-1zM361,118h1v3h-1zM360,121h1v1h-1zM368,117h1v1h-1zM369,118h1v3h-1zM368,121h1v1h-1zM376,117h1v1h-1zM377,118h1v3h-1zM376,121h1v1h-1zM384,117h1v1h-1zM385,118h1v3h-1zM384,121h1v1h-1zM392,117h1v1h-1zM393,118h1v3h-1zM392,121h1v1h-1zM400,117h1v1h-1zM401,118h1v3h-1zM400,121h1v1h-1zM408,117h1v1h-1zM409,118h1v3h-1zM408,121h1v1h-1zM416,117h1v1h-1zM417,118h1v3h-1zM416,121h1v1h-1zM424,117h1v1h-1zM425,118h1v3h-1zM424,121h1v1h-1zM432,117h1v1h-1zM433,118h1v3h-1zM432,121h1v1h-1zM440,117h1v1h-1zM441,118h1v3h-1zM440,121h1v1h-1zM448,117h1v1h-1zM449,118h1v3h-1zM448,121h1v1h-1zM456,117h1v1h-1zM457,118h1v3h-1zM456,121h1v1h-1zM464,117h1v1h-1zM465,118h1v3h-1zM464,121h1v1h-1zM472,117h1v1h-1zM473,118h1v3h-1zM472,121h1v1h-1zM480,117h1v1h-1zM481,118h1v3h-1zM480,121h1v1h-1zM488,117h1v1h-1zM489,118h1v3h-1zM488,121h1v1h-1zM496,117h1v1h-1zM497,118h1v3h-1zM496,121h1v1h-1zM504,117h1v1h-1zM505,118h1v3h-1zM504,121h1v1h-1zM512,117h1v1h-1zM513,118h1v3h-1zM512,121h1v1h-1zM520,117h1v1h-1zM521,118h1v3h-1zM520,121h1v1h-1zM528,117h1v1h-1zM529,118h1v3h-1zM528,121h1v1h-1zM536,117h1v1h-1zM537,118h1v3h-1zM536,121h1v1h-1zM544,117h1v1h-1zM545,118h1v3h-1zM544,121h1v1h-1zM552,117h1v1h-1zM553,118h1v3h-1zM552,121h1v1h-1zM560,117h1v1h-1zM561,118h1v3h-1zM560,121h1v1h-1zM568,117h1v1h-1zM569,118h1v3h-1zM568,121h1v1h-1zM576,117h1v1h-1zM577,118h1v3h-1zM576,121h1v1h-1zM584,117h1v1h-1zM585,118h1v3h-1zM584,121h1v1h-1zM592,117h1v1h-1zM593,118h1v3h-1zM592,121h1v1h-1zM600,117h1v1h-1zM601,118h1v3h-1zM600,121h1v1h-1zM608,117h1v1h-1zM609,118h1v3h-1zM608,121h1v1h-1zM616,117h1v1h-1zM617,118h1v3h-1zM616,121h1v1h-1zM624,117h1v1h-1zM625,118h1v3h-1zM624,121h1v1h-1zM632,117h1v1h-1zM633,118h1v3h-1zM632,121h1v1h-1zM640,117h1v1h-1zM641,118h1v3h-1zM640,121h1v1h-1zM648,117h1v1h-1zM649,118h1v3h-1zM648,121h1v1h-1zM656,117h1v1h-1zM657,118h1v3h-1zM656,121h1v1h-1zM664,117h1v1h-1zM665,118h1v3h-1zM664,121h1v1h-1zM672,117h1v1h-1zM673,118h1v3h-1zM672,121h1v1h-1zM680,117h1v1h-1zM681,118h1v3h-1zM680,121h1v1h-1zM688,117h1v1h-1zM689,118h1v3h-1zM688,121h1v1h-1zM696,117h1v1h-1zM697,118h1v3h-1zM696,121h1v1h-1zM704,117h1v1h-1zM705,118h1v3h-1zM704,121h1v1h-1zM712,117h1v1h-1zM713,118h1v3h-1zM712,121h1v1h-1zM720,117h1v1h-1zM721,118h1v3h-1zM720,121h1v1h-1zM728,117h1v1h-1zM729,118h1v3h-1zM728,121h1v1h-1zM736,117h1v1h-1zM737,118h1v3h-1zM736,121h1v1h-1zM744,117h1v1h-1zM745,118h1v3h-1zM744,121h1v1h-1zM752,117h1v1h-1zM753,118h1v3h-1zM752,121h1v1h-1zM760,117h1v1h-1zM761,118h1v3h-1zM760,121h1v1h-1zM768,117h1v1h-1zM769,118h1v3h-1zM768,121h1v1h-1zM776,117h1v1h-1zM777,118h1v3h-1zM776,121h1v1h-1zM784,117h1v1h-1zM785,118h1v3h-1zM784,121h1v1h-1zM792,117h1v1h-1zM793,118h1v3h-1zM792,121h1v1h-1zM800,117h1v1h-1zM801,118h1v3h-1zM800,121h1v1h-1zM808,117h1v1h-1zM809,118h1v3h-1zM808,121h1v1h-1zM816,117h1v1h-1zM817,118h1v3h-1zM816,121h1v1h-1zM824,117h1v1h-1zM825,118h1v3h-1zM824,121h1v1h-1zM832,117h1v1h-1zM833,118h1v3h-1zM832,121h1v1h-1zM840,117h1v1h-1zM841,118h1v3h-1zM840,121h1v1h-1zM848,117h1v1h-1zM849,118h1v3h-1zM848,121h1v1h-1zM856,117h1v1h-1zM857,118h1v3h-1zM856,121h1v1h-1zM864,117h1v1h-1zM865,118h1v3h-1zM864,121h1v1h-1zM872,117h1v1h-1zM873,118h1v3h-1zM872,121h1v1h-1zM880,117h1v1h-1zM881,118h1v3h-1zM880,121h1v1h-1zM888,117h1v1h-1zM889,118h1v3h-1zM888,121h1v1h-1zM896,117h1v1h-1zM897,118h1v3h-1zM896,121h1v1h-1zM904,117h1v1h-1zM905,118h1v3h-1zM904,121h1v1h-1zM912,117h1v1h-1zM913,118h1v3h-1zM912,121h1v1h-1zM920,117h1v1h-1zM921,118h1v3h-1zM920,121h1v1h-1zM928,117h1v1h-1zM929,118h1v3h-1zM928,121h1v1h-1zM936,117h1v1h-1zM937,118h1v3h-1zM936,121h1v1h-1zM944,117h1v1h-1zM945,118h1v3h-1zM944,121h1v1h-1z" fill="#0c0c78"/>
<path d="M159,116h1v1h-1zM159,122h1v1h-1zM167,116h1v1h-1zM167,122h1v1h-1zM175,116h1v1h-1zM175,122h1v1h-1zM183,116h1v1h-1zM183,122h1v1h-1zM191,116h1v1h-1zM191,122h1v1h-1zM199,116h1v1h-1zM199,122h1v1h-1zM207,116h1v1h-1zM207,122h1v1h-1zM215,116h1v1h-1zM215,122h1v1h-1zM223,116h1v1h-1zM223,122h1v1h-1zM231,116h1v1h-1zM231,122h1v1h-1zM239,116h1v1h-1zM239,122h1v1h-1zM247,116h1v1h-1zM247,122h1v1h-1zM255,116h1v1h-1zM255,122h1v1h-1zM263,116h1v1h-1zM263,122h1v1h-1zM271,116h1v1h-1zM271,122h1v1h-1zM279,116h1v1h-1zM279,122h1v1h-1zM287,116h1v1h-1zM287,122h1v1h-1zM295,116h1v1h-1zM295,122h1v1h-1zM303,116h1v1h-1zM303,122h1v1h-1zM311,116h1v1h-1zM311,122h1v1h-1zM319,116h1v1h-1zM319,122h1v1h-1zM327,116h1v1h-1zM327,122h1v1h-1zM335,116h1v1h-1zM335,122h1v1h-1zM343,116h1v1h-1zM343,122h1v1h-1zM351,116h1v1h-1zM351,122h1v1h-1zM359,116h1v1h-1zM359,122h1v1h-1zM367,116h1v1h-1zM367,122h1v1h-1zM375,116h1v1h-1zM375,122h1v1h-1zM383,116h1v1h-1zM383,122h1v1h-1zM391,116h1v1h-1zM391,122h1v1h-1zM399,116h1v1h-1zM399,122h1v1h-1zM407,116h1v1h-1zM407,122h1v1h-1zM415,116h1v1h-1zM415,122h1v1h-1zM423,116h1v1h-1zM423,122h1v1h-1zM431,116h1v1h-1zM431,122h1v1h-1zM439,116h1v1h-1zM439,122h1v1h-1zM447,116h1v1h-1zM447,122h1v1h-1zM455,116h1v1h-1zM455,122h1v1h-1zM463,116h1v1h-1zM463,122h1v1h-1zM471,116h1v1h-1zM471,122h1v1h-1zM479,116h1v1h-1zM479,122h1v1h-1zM487,116h1v1h-1zM487,122h1v1h-1zM495,116h1v1h-1zM495,122h1v1h-1zM503,116h1v1h-1zM503,122h1v1h-1zM511,116h1v1h-1zM511,122h1v1h-1zM519,116h1v1h-1zM519,122h1v1h-1zM527,116h1v1h-1zM527,122h1v1h-1zM535,116h1v1h-1zM535,122h1v1h-1zM543,116h1v1h-1zM543,122h1v1h-1zM551,116h1v1h-1zM551,122h1v1h-1zM559,116h1v1h-1zM559,122h1v1h-1zM567,116h1v1h-1zM567,122h1v1h-1zM575,116h1v1h-1zM575,122h1v1h-1zM583,116h1v1h-1zM583,122h1v1h-1zM591,116h1v1h-1zM591,122h1v1h-1zM599,116h1v1h-1zM599,122h1v1h-1zM607,116h1v1h-1zM607,122h1v1h-1zM615,116h1v1h-1zM615,122h1v1h-1zM623,116h1v1h-1zM623,122h1v1h-1zM631,116h1v1h-1zM631,122h1v1h-1zM639,116h1v1h-1zM639,122h1v1h-1zM647,116h1v1h-1zM647,122h1v1h-1zM655,116h1v1h-1zM655,122h1v1h-1zM663,116h1v1h-1zM663,122h1v1h-1zM671,116h1v1h-1zM671,122h1v1h-1zM679,116h1v1h-1zM679,122h1v1h-1zM687,116h1v1h-1zM687,122h1v1h-1zM695,116h1v1h-1zM695,122h1v1h-1zM703,116h1v1h-1zM703,122h1v1h-1zM711,116h1v1h-1zM711,122h1v1h-1zM719,116h1v1h-1zM719,122h1v1h-1zM727,116h1v1h-1zM727,122h1v1h-1zM735,116h1v1h-1zM735,122h1v1h-1zM743,116h1v1h-1zM743,122h1v1h-1zM751,116h1v1h-1zM751,122h1v1h-1zM759,116h1v1h-1zM759,122h1v1h-1zM767,116h1v1h-1zM767,122h1v1h-1zM775,116h1v1h-1zM775,122h1v1h-1zM783,116h1v1h-1zM783,122h1v1h-1zM791,116h1v1h-1zM791,122h1v1h-1zM799,116h1v1h-1zM799,122h1v1h-1zM807,116h1v1h-1zM807,122h1v1h-1zM815,116h1v1h-1zM815,122h1v1h-1zM823,116h1v1h-1zM823,122h1v1h-1zM831,116h1v1h-1zM831,122h1v1h-1zM839,116h1v1h-1zM839,122h1v1h-1zM847,116h1v1h-1zM847,122h1v1h-1zM855,116h1v1h-1zM855,122h1v1h-1zM863,116h1v1h-1zM863,122h1v1h-1zM871,116h1v1h-1zM871,122h1v1h-1zM879,116h1v1h-1zM879,122h1v1h-1zM887,116h1v1h-1zM887,122h1v1h-1zM895,116h1v1h-1zM895,122h1v1h-1zM903,116h1v1h-1zM903,122h1v1h-1zM911,116h1v1h-1zM911,122h1v1h-1zM919,116h1v1h-1zM919,122h1v1h-1zM927,116h1v1h-1zM927,122h1v1h-1zM935,116h1v1h-1zM935,122h1v1h-1zM943,116h1v1h-1zM943,122h1v1h-1z" fill="#0c0c78" fill-opacity="0.6"/>
<text transform="translate(151.4,140) scale(1,1.09)" text-anchor="end" font-size="13" fill="#0c0c78" xml:space="preserve">PRDM16</text>
<rect x="157" y="135" width="792" height="1" fill="#0c0c78"/>
<path d="M160,133h1v1h-1zM161,134h1v3h-1zM160,137h1v1h-1zM168,133h1v1h-1zM169,134h1v3h-1zM168,137h1v1h-1zM176,133h1v1h-1zM177,134h1v3h-1zM176,137h1v1h-1zM184,133h1v1h-1zM185,134h1v3h-1zM184,137h1v1h-1zM192,133h1v1h-1zM193,134h1v3h-1zM192,137h1v1h-1zM200,133h1v1h-1zM201,134h1v3h-1zM200,137h1v1h-1zM208,133h1v1h-1zM209,134h1v3h-1zM208,137h1v1h-1zM216,133h1v1h-1zM217,134h1v3h-1zM216,137h1v1h-1zM224,133h1v1h-1zM225,134h1v3h-1zM224,137h1v1h-1zM232,133h1v1h-1zM233,134h1v3h-1zM232,137h1v1h-1zM240,133h1v1h-1zM241,134h1v3h-1zM240,137h1v1h-1zM248,133h1v1h-1zM249,134h1v3h-1zM248,137h1v1h-1zM256,133h1v1h-1zM257,134h1v3h-1zM256,137h1v1h-1zM264,133h1v1h-1zM265,134h1v3h-1zM264,137h1v1h-1zM272,133h1v1h-1zM273,134h1v3h-1zM272,137h1v1h-1zM280,133h1v1h-1zM281,134h1v3h-1zM280,137h1v1h-1zM288,133h1v1h-1zM289,134h1v3h-1zM288,137h1v1h-1zM296,133h1v1h-1zM297,134h1v3h-1zM296,137h1v1h-1zM304,133h1v1h-1zM305,134h1v3h-1zM304,137h1v1h-1zM312,133h1v1h-1zM313,134h1v3h-1zM312,137h1v1h-1zM320,133h1v1h-1zM321,134h1v3h-1zM320,137h1v1h-1zM328,133h1v1h-1zM329,134h1v3h-1zM328,137h1v1h-1zM336,133h1v1h-1zM337,134h1v3h-1zM336,137h1v1h-1zM344,133h1v1h-1zM345,134h1v3h-1zM344,137h1v1h-1zM352,133h1v1h-1zM353,134h1v3h-1zM352,137h1v1h-1zM360,133h1v1h-1zM361,134h1v3h-1zM360,137h1v1h-1zM368,133h1v1h-1zM369,134h1v3h-1zM368,137h1v1h-1zM376,133h1v1h-1zM377,134h1v3h-1zM376,137h1v1h-1zM384,133h1v1h-1zM385,134h1v3h-1zM384,137h1v1h-1zM392,133h1v1h-1zM393,134h1v3h-1zM392,137h1v1h-1zM400,133h1v1h-1zM401,134h1v3h-1zM400,137h1v1h-1zM408,133h1v1h-1zM409,134h1v3h-1zM408,137h1v1h-1zM416,133h1v1h-1zM417,134h1v3h-1zM416,137h1v1h-1zM424,133h1v1h-1zM425,134h1v3h-1zM424,137h1v1h-1zM432,133h1v1h-1zM433,134h1v3h-1zM432,137h1v1h-1zM440,133h1v1h-1zM441,134h1v3h-1zM440,137h1v1h-1zM448,133h1v1h-1zM449,134h1v3h-1zM448,137h1v1h-1zM456,133h1v1h-1zM457,134h1v3h-1zM456,137h1v1h-1zM464,133h1v1h-1zM465,134h1v3h-1zM464,137h1v1h-1zM472,133h1v1h-1zM473,134h1v3h-1zM472,137h1v1h-1zM480,133h1v1h-1zM481,134h1v3h-1zM480,137h1v1h-1zM488,133h1v1h-1zM489,134h1v3h-1zM488,137h1v1h-1zM496,133h1v1h-1zM497,134h1v3h-1zM496,137h1v1h-1zM504,133h1v1h-1zM505,134h1v3h-1zM504,137h1v1h-1zM512,133h1v1h-1zM513,134h1v3h-1zM512,137h1v1h-1zM520,133h1v1h-1zM521,134h1v3h-1zM520,137h1v1h-1zM528,133h1v1h-1zM529,134h1v3h-1zM528,137h1v1h-1zM536,133h1v1h-1zM537,134h1v3h-1zM536,137h1v1h-1zM544,133h1v1h-1zM545,134h1v3h-1zM544,137h1v1h-1zM552,133h1v1h-1zM553,134h1v3h-1zM552,137h1v1h-1zM560,133h1v1h-1zM561,134h1v3h-1zM560,137h1v1h-1zM568,133h1v1h-1zM569,134h1v3h-1zM568,137h1v1h-1zM576,133h1v1h-1zM577,134h1v3h-1zM576,137h1v1h-1zM584,133h1v1h-1zM585,134h1v3h-1zM584,137h1v1h-1zM592,133h1v1h-1zM593,134h1v3h-1zM592,137h1v1h-1zM600,133h1v1h-1zM601,134h1v3h-1zM600,137h1v1h-1zM608,133h1v1h-1zM609,134h1v3h-1zM608,137h1v1h-1zM616,133h1v1h-1zM617,134h1v3h-1zM616,137h1v1h-1zM624,133h1v1h-1zM625,134h1v3h-1zM624,137h1v1h-1zM632,133h1v1h-1zM633,134h1v3h-1zM632,137h1v1h-1zM640,133h1v1h-1zM641,134h1v3h-1zM640,137h1v1h-1zM648,133h1v1h-1zM649,134h1v3h-1zM648,137h1v1h-1zM656,133h1v1h-1zM657,134h1v3h-1zM656,137h1v1h-1zM664,133h1v1h-1zM665,134h1v3h-1zM664,137h1v1h-1zM672,133h1v1h-1zM673,134h1v3h-1zM672,137h1v1h-1zM680,133h1v1h-1zM681,134h1v3h-1zM680,137h1v1h-1zM688,133h1v1h-1zM689,134h1v3h-1zM688,137h1v1h-1zM696,133h1v1h-1zM697,134h1v3h-1zM696,137h1v1h-1zM704,133h1v1h-1zM705,134h1v3h-1zM704,137h1v1h-1zM712,133h1v1h-1zM713,134h1v3h-1zM712,137h1v1h-1zM720,133h1v1h-1zM721,134h1v3h-1zM720,137h1v1h-1zM728,133h1v1h-1zM729,134h1v3h-1zM728,137h1v1h-1zM736,133h1v1h-1zM737,134h1v3h-1zM736,137h1v1h-1zM744,133h1v1h-1zM745,134h1v3h-1zM744,137h1v1h-1zM752,133h1v1h-1zM753,134h1v3h-1zM752,137h1v1h-1zM760,133h1v1h-1zM761,134h1v3h-1zM760,137h1v1h-1zM768,133h1v1h-1zM769,134h1v3h-1zM768,137h1v1h-1zM776,133h1v1h-1zM777,134h1v3h-1zM776,137h1v1h-1zM784,133h1v1h-1zM785,134h1v3h-1zM784,137h1v1h-1zM792,133h1v1h-1zM793,134h1v3h-1zM792,137h1v1h-1zM800,133h1v1h-1zM801,134h1v3h-1zM800,137h1v1h-1zM808,133h1v1h-1zM809,134h1v3h-1zM808,137h1v1h-1zM816,133h1v1h-1zM817,134h1v3h-1zM816,137h1v1h-1zM824,133h1v1h-1zM825,134h1v3h-1zM824,137h1v1h-1zM832,133h1v1h-1zM833,134h1v3h-1zM832,137h1v1h-1zM840,133h1v1h-1zM841,134h1v3h-1zM840,137h1v1h-1zM848,133h1v1h-1zM849,134h1v3h-1zM848,137h1v1h-1zM856,133h1v1h-1zM857,134h1v3h-1zM856,137h1v1h-1zM864,133h1v1h-1zM865,134h1v3h-1zM864,137h1v1h-1zM872,133h1v1h-1zM873,134h1v3h-1zM872,137h1v1h-1zM880,133h1v1h-1zM881,134h1v3h-1zM880,137h1v1h-1zM888,133h1v1h-1zM889,134h1v3h-1zM888,137h1v1h-1zM896,133h1v1h-1zM897,134h1v3h-1zM896,137h1v1h-1zM904,133h1v1h-1zM905,134h1v3h-1zM904,137h1v1h-1zM912,133h1v1h-1zM913,134h1v3h-1zM912,137h1v1h-1zM920,133h1v1h-1zM921,134h1v3h-1zM920,137h1v1h-1zM928,133h1v1h-1zM929,134h1v3h-1zM928,137h1v1h-1zM936,133h1v1h-1zM937,134h1v3h-1zM936,137h1v1h-1zM944,133h1v1h-1zM945,134h1v3h-1zM944,137h1v1h-1z" fill="#0c0c78"/>
<path d="M159,132h1v1h-1zM159,138h1v1h-1zM167,132h1v1h-1zM167,138h1v1h-1zM175,132h1v1h-1zM175,138h1v1h-1zM183,132h1v1h-1zM183,138h1v1h-1zM191,132h1v1h-1zM191,138h1v1h-1zM199,132h1v1h-1zM199,138h1v1h-1zM207,132h1v1h-1zM207,138h1v1h-1zM215,132h1v1h-1zM215,138h1v1h-1zM223,132h1v1h-1zM223,138h1v1h-1zM231,132h1v1h-1zM231,138h1v1h-1zM239,132h1v1h-1zM239,138h1v1h-1zM247,132h1v1h-1zM247,138h1v1h-1zM255,132h1v1h-1zM255,138h1v1h-1zM263,132h1v1h-1zM263,138h1v1h-1zM271,132h1v1h-1zM271,138h1v1h-1zM279,132h1v1h-1zM279,138h1v1h-1zM287,132h1v1h-1zM287,138h1v1h-1zM295,132h1v1h-1zM295,138h1v1h-1zM303,132h1v1h-1zM303,138h1v1h-1zM311,132h1v1h-1zM311,138h1v1h-1zM319,132h1v1h-1zM319,138h1v1h-1zM327,132h1v1h-1zM327,138h1v1h-1zM335,132h1v1h-1zM335,138h1v1h-1zM343,132h1v1h-1zM343,138h1v1h-1zM351,132h1v1h-1zM351,138h1v1h-1zM359,132h1v1h-1zM359,138h1v1h-1zM367,132h1v1h-1zM367,138h1v1h-1zM375,132h1v1h-1zM375,138h1v1h-1zM383,132h1v1h-1zM383,138h1v1h-1zM391,132h1v1h-1zM391,138h1v1h-1zM399,132h1v1h-1zM399,138h1v1h-1zM407,132h1v1h-1zM407,138h1v1h-1zM415,132h1v1h-1zM415,138h1v1h-1zM423,132h1v1h-1zM423,138h1v1h-1zM431,132h1v1h-1zM431,138h1v1h-1zM439,132h1v1h-1zM439,138h1v1h-1zM447,132h1v1h-1zM447,138h1v1h-1zM455,132h1v1h-1zM455,138h1v1h-1zM463,132h1v1h-1zM463,138h1v1h-1zM471,132h1v1h-1zM471,138h1v1h-1zM479,132h1v1h-1zM479,138h1v1h-1zM487,132h1v1h-1zM487,138h1v1h-1zM495,132h1v1h-1zM495,138h1v1h-1zM503,132h1v1h-1zM503,138h1v1h-1zM511,132h1v1h-1zM511,138h1v1h-1zM519,132h1v1h-1zM519,138h1v1h-1zM527,132h1v1h-1zM527,138h1v1h-1zM535,132h1v1h-1zM535,138h1v1h-1zM543,132h1v1h-1zM543,138h1v1h-1zM551,132h1v1h-1zM551,138h1v1h-1zM559,132h1v1h-1zM559,138h1v1h-1zM567,132h1v1h-1zM567,138h1v1h-1zM575,132h1v1h-1zM575,138h1v1h-1zM583,132h1v1h-1zM583,138h1v1h-1zM591,132h1v1h-1zM591,138h1v1h-1zM599,132h1v1h-1zM599,138h1v1h-1zM607,132h1v1h-1zM607,138h1v1h-1zM615,132h1v1h-1zM615,138h1v1h-1zM623,132h1v1h-1zM623,138h1v1h-1zM631,132h1v1h-1zM631,138h1v1h-1zM639,132h1v1h-1zM639,138h1v1h-1zM647,132h1v1h-1zM647,138h1v1h-1zM655,132h1v1h-1zM655,138h1v1h-1zM663,132h1v1h-1zM663,138h1v1h-1zM671,132h1v1h-1zM671,138h1v1h-1zM679,132h1v1h-1zM679,138h1v1h-1zM687,132h1v1h-1zM687,138h1v1h-1zM695,132h1v1h-1zM695,138h1v1h-1zM703,132h1v1h-1zM703,138h1v1h-1zM711,132h1v1h-1zM711,138h1v1h-1zM719,132h1v1h-1zM719,138h1v1h-1zM727,132h1v1h-1zM727,138h1v1h-1zM735,132h1v1h-1zM735,138h1v1h-1zM743,132h1v1h-1zM743,138h1v1h-1zM751,132h1v1h-1zM751,138h1v1h-1zM759,132h1v1h-1zM759,138h1v1h-1zM767,132h1v1h-1zM767,138h1v1h-1zM775,132h1v1h-1zM775,138h1v1h-1zM783,132h1v1h-1zM783,138h1v1h-1zM791,132h1v1h-1zM791,138h1v1h-1zM799,132h1v1h-1zM799,138h1v1h-1zM807,132h1v1h-1zM807,138h1v1h-1zM815,132h1v1h-1zM815,138h1v1h-1zM823,132h1v1h-1zM823,138h1v1h-1zM831,132h1v1h-1zM831,138h1v1h-1zM839,132h1v1h-1zM839,138h1v1h-1zM847,132h1v1h-1zM847,138h1v1h-1zM855,132h1v1h-1zM855,138h1v1h-1zM863,132h1v1h-1zM863,138h1v1h-1zM871,132h1v1h-1zM871,138h1v1h-1zM879,132h1v1h-1zM879,138h1v1h-1zM887,132h1v1h-1zM887,138h1v1h-1zM895,132h1v1h-1zM895,138h1v1h-1zM903,132h1v1h-1zM903,138h1v1h-1zM911,132h1v1h-1zM911,138h1v1h-1zM919,132h1v1h-1zM919,138h1v1h-1zM927,132h1v1h-1zM927,138h1v1h-1zM935,132h1v1h-1zM935,138h1v1h-1zM943,132h1v1h-1zM943,138h1v1h-1z" fill="#0c0c78" fill-opacity="0.6"/>
<text transform="translate(552,156) scale(1,1)" text-anchor="middle" font-size="11" fill="#000" xml:space="preserve">RefSeq genes from NCBI</text>
<text transform="translate(151.4,171) scale(1,1.09)" text-anchor="end" font-size="13" fill="#0c0c78" xml:space="preserve">RefSeq Curated</text>
<rect x="157" y="166" width="792" height="1" fill="#0c0c78"/>
<text transform="translate(552,187) scale(1,1)" text-anchor="middle" font-size="11" fill="#000" textLength="215.8" lengthAdjust="spacing" xml:space="preserve">Publications: Sequences in Scientific Articles</text>
<text transform="translate(151.4,202) scale(1,1.09)" text-anchor="end" font-size="13" fill="#000" xml:space="preserve">Sequences</text>
<text transform="translate(151.4,218) scale(1,1.09)" text-anchor="end" font-size="13" fill="#000" xml:space="preserve">SNPs</text>
<text transform="translate(552,235) scale(1,1.09)" text-anchor="middle" font-size="13" fill="#146414" textLength="371.1" lengthAdjust="spacing" xml:space="preserve">OMIM Gene Phenotypes - Dark Green Can Be Disease-causing</text>
<text transform="translate(151.4,249) scale(1,1.09)" text-anchor="end" font-size="13" fill="#146414" xml:space="preserve">OMIM Genes</text>
<rect x="156" y="237" width="793" height="15" fill="#005000"/>
<text transform="translate(552,265) scale(1,1)" text-anchor="middle" font-size="11" fill="#000" xml:space="preserve">Short Genetic Variants from dbSNP release 155</text>
<text transform="translate(151.4,280) scale(1,1.09)" text-anchor="end" font-size="13" fill="#000" xml:space="preserve">Common dbSNP(155)</text>
<text transform="translate(552,297) scale(1,1.09)" text-anchor="middle" font-size="13" fill="#000" textLength="572.4" lengthAdjust="spacing" xml:space="preserve">Gene Expression in 54 tissues from GTEx RNA-seq of 17382 samples, 948 donors (V8, Aug 2019)</text>
<text transform="translate(151.4,330) scale(1,1.09)" text-anchor="end" font-size="13" fill="#000" xml:space="preserve">PRDM16</text>
<rect x="156.5" y="300.5" width="377" height="46" fill="#fff" stroke="#eeeeee" stroke-width="1"/>
<rect x="156" y="331" width="5" height="15" fill="#FFA54F"/>
<rect x="163" y="335" width="5" height="11" fill="#EE9A00"/>
<rect x="170" y="343" width="5" height="3" fill="#8FBC8F"/>
<rect x="177" y="300" width="5" height="46" fill="#8B1C62"/>
<rect x="184" y="305" width="5" height="41" fill="#EE6A50"/>
<rect x="191" y="302" width="5" height="44" fill="#FF0000"/>
<rect x="198" y="334" width="5" height="12" fill="#CDB79E"/>
<rect x="205" y="327" width="5" height="19" fill="#EEEE00"/>
<rect x="212" y="326" width="5" height="20" fill="#EEEE00"/>
<rect x="219" y="325" width="5" height="21" fill="#EEEE00"/>
<rect x="226" y="344" width="5" height="2" fill="#EEEE00"/>
<rect x="233" y="343" width="5" height="3" fill="#EEEE00"/>
<rect x="240" y="324" width="5" height="22" fill="#EEEE00"/>
<rect x="247" y="326" width="5" height="20" fill="#EEEE00"/>
<rect x="254" y="332" width="5" height="14" fill="#EEEE00"/>
<rect x="261" y="335" width="5" height="11" fill="#EEEE00"/>
<rect x="268" y="327" width="5" height="19" fill="#EEEE00"/>
<rect x="275" y="328" width="5" height="18" fill="#EEEE00"/>
<rect x="282" y="332" width="5" height="14" fill="#EEEE00"/>
<rect x="289" y="334" width="5" height="12" fill="#EEEE00"/>
<rect x="296" y="333" width="5" height="13" fill="#00CDCD"/>
<rect x="310" y="345" width="5" height="1" fill="#9AC0CD"/>
<rect x="317" y="330" width="5" height="16" fill="#EED5D2"/>
<rect x="324" y="330" width="5" height="16" fill="#EED5D2"/>
<rect x="331" y="334" width="5" height="12" fill="#CDB79E"/>
<rect x="338" y="337" width="5" height="9" fill="#EECFA1"/>
<rect x="345" y="329" width="5" height="17" fill="#8B7355"/>
<rect x="352" y="341" width="5" height="5" fill="#8B7355"/>
<rect x="359" y="332" width="5" height="14" fill="#CDAA7D"/>
<rect x="366" y="328" width="5" height="18" fill="#EED5D2"/>
<rect x="373" y="337" width="5" height="9" fill="#B452CD"/>
<rect x="380" y="328" width="5" height="18" fill="#7A378B"/>
<rect x="387" y="328" width="5" height="18" fill="#CDB79E"/>
<rect x="394" y="318" width="5" height="28" fill="#CDB79E"/>
<rect x="401" y="345" width="5" height="1" fill="#CDB79E"/>
<rect x="408" y="323" width="5" height="23" fill="#9ACD32"/>
<rect x="415" y="341" width="5" height="5" fill="#CDB79E"/>
<rect x="422" y="344" width="5" height="2" fill="#7777FF"/>
<rect x="429" y="307" width="5" height="39" fill="#FFD700"/>
<rect x="436" y="330" width="5" height="16" fill="#FFB6C1"/>
<rect x="443" y="326" width="5" height="20" fill="#CD9B1D"/>
<rect x="450" y="343" width="5" height="3" fill="#B4EEB4"/>
<rect x="457" y="337" width="5" height="9" fill="#D9D9D9"/>
<rect x="464" y="341" width="5" height="5" fill="#3A5FCD"/>
<rect x="471" y="339" width="5" height="7" fill="#1E90FF"/>
<rect x="478" y="336" width="5" height="10" fill="#CDB79E"/>
<rect x="485" y="338" width="5" height="8" fill="#CDB79E"/>
<rect x="492" y="313" width="5" height="33" fill="#FFD39B"/>
<rect x="499" y="334" width="5" height="12" fill="#A6A6A6"/>
<rect x="506" y="308" width="5" height="38" fill="#008B45"/>
<rect x="513" y="333" width="5" height="13" fill="#EED5D2"/>
<rect x="520" y="335" width="5" height="11" fill="#EED5D2"/>
<rect x="156" y="347" width="793" height="2" fill="#000080"/>
<text transform="translate(552,364) scale(1,1.09)" text-anchor="middle" font-size="13" fill="#000" textLength="542.5" lengthAdjust="spacing" xml:space="preserve">H3K27Ac Mark (Often Found Near Active Regulatory Elements) on 7 cell lines from ENCODE</text>
<text transform="translate(13,378) scale(1,1.09)" text-anchor="start" font-size="13" fill="#000" xml:space="preserve">Layered H3K27Ac</text>
<rect x="156" y="395" width="793" height="1" fill="#6cbe50"/>
<text transform="translate(552,410) scale(1,1.09)" text-anchor="middle" font-size="13" fill="#3c3c8c" textLength="294.4" lengthAdjust="spacing" xml:space="preserve">100 vertebrates Basewise Conservation by PhyloP</text>
<text transform="translate(13,434) scale(1,1.09)" text-anchor="start" font-size="13" fill="#3c3c8c" xml:space="preserve">100 Vert. Cons</text>
<text transform="translate(141,409) scale(1,1.0)" text-anchor="end" font-size="13" fill="#3c3c8c" xml:space="preserve">4.88</text>
<rect x="145" y="410" width="7" height="1" fill="#3c3c8c"/>
<text transform="translate(141,459) scale(1,1.0)" text-anchor="end" font-size="13" fill="#8c3232" xml:space="preserve">-4.5</text>
<rect x="145" y="460" width="7" height="1" fill="#8c3232"/>
<defs><linearGradient id="gb1" x1="0" x2="1" y1="0" y2="0"><stop offset="0" stop-color="#1010ff"/><stop offset="0.14" stop-color="#1010ff"/><stop offset="0.3" stop-color="#c4c4ff"/><stop offset="0.75" stop-color="#c4c4ff"/><stop offset="0.86" stop-color="#1010ff"/><stop offset="1" stop-color="#1010ff"/></linearGradient></defs>
<defs><linearGradient id="gb2" x1="0" x2="1" y1="0" y2="0"><stop offset="0" stop-color="#1010ff"/><stop offset="0.1" stop-color="#1010ff"/><stop offset="0.25" stop-color="#c4c4ff"/><stop offset="0.8" stop-color="#c4c4ff"/><stop offset="0.9" stop-color="#1010ff"/><stop offset="1" stop-color="#1010ff"/></linearGradient></defs>
<defs><linearGradient id="go1" x1="0" x2="1" y1="0" y2="0"><stop offset="0" stop-color="#b0a030"/><stop offset="0.1" stop-color="#b0a030"/><stop offset="0.25" stop-color="#e0dcb8"/><stop offset="0.8" stop-color="#e0dcb8"/><stop offset="0.92" stop-color="#b0a030"/><stop offset="1" stop-color="#b0a030"/></linearGradient></defs>
<path d="M165,439.5 L175,438.6 L196,438.6 L206,439.5" stroke="#ff2a2a" stroke-width="1.1" fill="none"/>
<path d="M167,441.2 L210,441.4" stroke="url(#gb1)" stroke-width="1.6" fill="none"/>
<path d="M234,436 L277,436.4" stroke="url(#gb2)" stroke-width="1.5" fill="none"/>
<path d="M497,440.3 Q516,437 537,440.3" stroke="#ff1010" stroke-width="1.3" fill="none"/>
<path d="M630,444 L673,444.2" stroke="url(#gb1)" stroke-width="1.5" fill="none"/>
<path d="M629,442.4 L644,438.8 Q648.5,437.6 653,438.8 L669,442.4" stroke="#ff0000" stroke-width="1.7" fill="none"/>
<path d="M643,441.6 L654,441.6" stroke="#ff8888" stroke-width="0.8" fill="none"/>
<path d="M763,439 L802,439.2" stroke="url(#go1)" stroke-width="1.3" fill="none"/>
<path d="M826,438.5 L864,438.5" stroke="#9ef09e" stroke-width="0.8" fill="none"/>
<rect x="842" y="437" width="6" height="3" fill="#10e010"/>
<text transform="translate(552,476) scale(1,1.09)" text-anchor="middle" font-size="13" fill="#0c0c64" textLength="216.3" lengthAdjust="spacing" xml:space="preserve">Multiz Alignments of 100 Vertebrates</text>
<text transform="translate(151.4,490) scale(1,1.09)" text-anchor="end" font-size="13" fill="#e68c1e" xml:space="preserve">Gaps</text>
<text transform="translate(221.2,489.6) scale(1,1)" text-anchor="middle" font-size="12" fill="#e68c1e" xml:space="preserve">13</text>
<rect x="222" y="537" width="1" height="14" fill="#e68c1e"/>
<text transform="translate(151.4,505) scale(1,1.09)" text-anchor="end" font-size="13" fill="#0c0c64" xml:space="preserve">Human</text>
<text transform="translate(187.0,505) scale(1,1.09)" text-anchor="middle" font-size="13" fill="#00005a" stroke="#00005a" stroke-width="0.12" xml:space="preserve">A</text>
<text transform="translate(253.03,505) scale(1,1.09)" text-anchor="middle" font-size="13" fill="#00005a" stroke="#00005a" stroke-width="0.12" xml:space="preserve">G</text>
<text transform="translate(319.06,505) scale(1,1.09)" text-anchor="middle" font-size="13" fill="#00005a" stroke="#00005a" stroke-width="0.12" xml:space="preserve">C</text>
<text transform="translate(385.09,505) scale(1,1.09)" text-anchor="middle" font-size="13" fill="#00005a" stroke="#00005a" stroke-width="0.12" xml:space="preserve">T</text>
<text transform="translate(451.12,505) scale(1,1.09)" text-anchor="middle" font-size="13" fill="#00005a" stroke="#00005a" stroke-width="0.12" xml:space="preserve">C</text>
<text transform="translate(517.1500000000001,505) scale(1,1.09)" text-anchor="middle" font-size="13" fill="#00005a" stroke="#00005a" stroke-width="0.12" xml:space="preserve">A</text>
<text transform="translate(583.1800000000001,505) scale(1,1.09)" text-anchor="middle" font-size="13" fill="#00005a" stroke="#00005a" stroke-width="0.12" xml:space="preserve">C</text>
<text transform="translate(649.21,505) scale(1,1.09)" text-anchor="middle" font-size="13" fill="#00005a" stroke="#00005a" stroke-width="0.12" xml:space="preserve">A</text>
<text transform="translate(715.24,505) scale(1,1.09)" text-anchor="middle" font-size="13" fill="#00005a" stroke="#00005a" stroke-width="0.12" xml:space="preserve">C</text>
<text transform="translate(781.27,505) scale(1,1.09)" text-anchor="middle" font-size="13" fill="#00005a" stroke="#00005a" stroke-width="0.12" xml:space="preserve">C</text>
<text transform="translate(847.3,505) scale(1,1.09)" text-anchor="middle" font-size="13" fill="#00005a" stroke="#00005a" stroke-width="0.12" xml:space="preserve">T</text>
<text transform="translate(913.3300000000002,505) scale(1,1.09)" text-anchor="middle" font-size="13" fill="#00005a" stroke="#00005a" stroke-width="0.12" xml:space="preserve">C</text>
<text transform="translate(151.4,520) scale(1,1.09)" text-anchor="end" font-size="13" fill="#0c0c64" xml:space="preserve">Rhesus</text>
<text transform="translate(187.0,520) scale(1,1.09)" text-anchor="middle" font-size="13" fill="#00005a" stroke="#00005a" stroke-width="0.12" xml:space="preserve">A</text>
<text transform="translate(253.03,520) scale(1,1.09)" text-anchor="middle" font-size="13" fill="#00005a" stroke="#00005a" stroke-width="0.12" xml:space="preserve">G</text>
<text transform="translate(319.06,520) scale(1,1.09)" text-anchor="middle" font-size="13" fill="#00005a" stroke="#00005a" stroke-width="0.12" xml:space="preserve">C</text>
<text transform="translate(385.09,520) scale(1,1.09)" text-anchor="middle" font-size="13" fill="#00005a" stroke="#00005a" stroke-width="0.12" xml:space="preserve">T</text>
<text transform="translate(451.12,520) scale(1,1.09)" text-anchor="middle" font-size="13" fill="#00005a" stroke="#00005a" stroke-width="0.12" xml:space="preserve">C</text>
<text transform="translate(517.1500000000001,520) scale(1,1.09)" text-anchor="middle" font-size="13" fill="#00005a" stroke="#00005a" stroke-width="0.12" xml:space="preserve">A</text>
<text transform="translate(583.1800000000001,520) scale(1,1.09)" text-anchor="middle" font-size="13" fill="#00005a" stroke="#00005a" stroke-width="0.12" xml:space="preserve">C</text>
<text transform="translate(649.21,520) scale(1,1.09)" text-anchor="middle" font-size="13" fill="#00005a" stroke="#00005a" stroke-width="0.12" xml:space="preserve">A</text>
<text transform="translate(715.24,520) scale(1,1.09)" text-anchor="middle" font-size="13" fill="#00005a" stroke="#00005a" stroke-width="0.12" xml:space="preserve">C</text>
<text transform="translate(781.27,520) scale(1,1.09)" text-anchor="middle" font-size="13" fill="#8a8abc" stroke="#8a8abc" stroke-width="0.2" xml:space="preserve">T</text>
<text transform="translate(847.3,520) scale(1,1.09)" text-anchor="middle" font-size="13" fill="#00005a" stroke="#00005a" stroke-width="0.12" xml:space="preserve">T</text>
<text transform="translate(913.3300000000002,520) scale(1,1.09)" text-anchor="middle" font-size="13" fill="#00005a" stroke="#00005a" stroke-width="0.12" xml:space="preserve">C</text>
<text transform="translate(151.4,535) scale(1,1.09)" text-anchor="end" font-size="13" fill="#146414" xml:space="preserve">Mouse</text>
<rect x="185" y="531" width="4" height="1" fill="#6e6ea0"/>
<text transform="translate(253.03,535) scale(1,1.09)" text-anchor="middle" font-size="13" fill="#8a8abc" stroke="#8a8abc" stroke-width="0.2" xml:space="preserve">C</text>
<text transform="translate(319.06,535) scale(1,1.09)" text-anchor="middle" font-size="13" fill="#00005a" stroke="#00005a" stroke-width="0.12" xml:space="preserve">C</text>
<text transform="translate(385.09,535) scale(1,1.09)" text-anchor="middle" font-size="13" fill="#00005a" stroke="#00005a" stroke-width="0.12" xml:space="preserve">T</text>
<text transform="translate(451.12,535) scale(1,1.09)" text-anchor="middle" font-size="13" fill="#00005a" stroke="#00005a" stroke-width="0.12" xml:space="preserve">C</text>
<text transform="translate(517.1500000000001,535) scale(1,1.09)" text-anchor="middle" font-size="13" fill="#00005a" stroke="#00005a" stroke-width="0.12" xml:space="preserve">A</text>
<text transform="translate(583.1800000000001,535) scale(1,1.09)" text-anchor="middle" font-size="13" fill="#00005a" stroke="#00005a" stroke-width="0.12" xml:space="preserve">C</text>
<text transform="translate(649.21,535) scale(1,1.09)" text-anchor="middle" font-size="13" fill="#8a8abc" stroke="#8a8abc" stroke-width="0.2" xml:space="preserve">T</text>
<text transform="translate(715.24,535) scale(1,1.09)" text-anchor="middle" font-size="13" fill="#8a8abc" stroke="#8a8abc" stroke-width="0.2" xml:space="preserve">G</text>
<text transform="translate(781.27,535) scale(1,1.09)" text-anchor="middle" font-size="13" fill="#8a8abc" stroke="#8a8abc" stroke-width="0.2" xml:space="preserve">T</text>
<text transform="translate(847.3,535) scale(1,1.09)" text-anchor="middle" font-size="13" fill="#8a8abc" stroke="#8a8abc" stroke-width="0.2" xml:space="preserve">C</text>
<text transform="translate(913.3300000000002,535) scale(1,1.09)" text-anchor="middle" font-size="13" fill="#00005a" stroke="#00005a" stroke-width="0.12" xml:space="preserve">C</text>
<text transform="translate(151.4,550) scale(1,1.09)" text-anchor="end" font-size="13" fill="#0c0c64" xml:space="preserve">Dog</text>
<text transform="translate(187.0,550) scale(1,1.09)" text-anchor="middle" font-size="13" fill="#8a8abc" stroke="#8a8abc" stroke-width="0.2" xml:space="preserve">G</text>
<text transform="translate(253.03,550) scale(1,1.09)" text-anchor="middle" font-size="13" fill="#00005a" stroke="#00005a" stroke-width="0.12" xml:space="preserve">G</text>
<text transform="translate(319.06,550) scale(1,1.09)" text-anchor="middle" font-size="13" fill="#00005a" stroke="#00005a" stroke-width="0.12" xml:space="preserve">C</text>
<text transform="translate(385.09,550) scale(1,1.09)" text-anchor="middle" font-size="13" fill="#00005a" stroke="#00005a" stroke-width="0.12" xml:space="preserve">T</text>
<text transform="translate(451.12,550) scale(1,1.09)" text-anchor="middle" font-size="13" fill="#8a8abc" stroke="#8a8abc" stroke-width="0.2" xml:space="preserve">T</text>
<text transform="translate(517.1500000000001,550) scale(1,1.09)" text-anchor="middle" font-size="13" fill="#8a8abc" stroke="#8a8abc" stroke-width="0.2" xml:space="preserve">G</text>
<text transform="translate(583.1800000000001,550) scale(1,1.09)" text-anchor="middle" font-size="13" fill="#8a8abc" stroke="#8a8abc" stroke-width="0.2" xml:space="preserve">G</text>
<text transform="translate(649.21,550) scale(1,1.09)" text-anchor="middle" font-size="13" fill="#8a8abc" stroke="#8a8abc" stroke-width="0.2" xml:space="preserve">T</text>
<text transform="translate(715.24,550) scale(1,1.09)" text-anchor="middle" font-size="13" fill="#00005a" stroke="#00005a" stroke-width="0.12" xml:space="preserve">C</text>
<text transform="translate(781.27,550) scale(1,1.09)" text-anchor="middle" font-size="13" fill="#8a8abc" stroke="#8a8abc" stroke-width="0.2" xml:space="preserve">T</text>
<text transform="translate(847.3,550) scale(1,1.09)" text-anchor="middle" font-size="13" fill="#00005a" stroke="#00005a" stroke-width="0.12" xml:space="preserve">T</text>
<text transform="translate(913.3300000000002,550) scale(1,1.09)" text-anchor="middle" font-size="13" fill="#00005a" stroke="#00005a" stroke-width="0.12" xml:space="preserve">C</text>
<text transform="translate(151.4,565) scale(1,1.09)" text-anchor="end" font-size="13" fill="#146414" xml:space="preserve">Elephant</text>
<rect x="183" y="560" width="7" height="1" fill="#6e6ea0"/>
<rect x="183" y="563" width="7" height="1" fill="#6e6ea0"/>
<rect x="249" y="560" width="7" height="1" fill="#6e6ea0"/>
<rect x="249" y="563" width="7" height="1" fill="#6e6ea0"/>
<rect x="315" y="560" width="7" height="1" fill="#6e6ea0"/>
<rect x="315" y="563" width="7" height="1" fill="#6e6ea0"/>
<rect x="381" y="560" width="7" height="1" fill="#6e6ea0"/>
<rect x="381" y="563" width="7" height="1" fill="#6e6ea0"/>
<rect x="447" y="560" width="7" height="1" fill="#6e6ea0"/>
<rect x="447" y="563" width="7" height="1" fill="#6e6ea0"/>
<rect x="513" y="560" width="7" height="1" fill="#6e6ea0"/>
<rect x="513" y="563" width="7" height="1" fill="#6e6ea0"/>
<rect x="579" y="560" width="7" height="1" fill="#6e6ea0"/>
<rect x="579" y="563" width="7" height="1" fill="#6e6ea0"/>
<rect x="646" y="560" width="7" height="1" fill="#6e6ea0"/>
<rect x="646" y="563" width="7" height="1" fill="#6e6ea0"/>
<rect x="712" y="560" width="7" height="1" fill="#6e6ea0"/>
<rect x="712" y="563" width="7" height="1" fill="#6e6ea0"/>
<rect x="778" y="560" width="7" height="1" fill="#6e6ea0"/>
<rect x="778" y="563" width="7" height="1" fill="#6e6ea0"/>
<rect x="844" y="560" width="7" height="1" fill="#6e6ea0"/>
<rect x="844" y="563" width="7" height="1" fill="#6e6ea0"/>
<rect x="910" y="560" width="7" height="1" fill="#6e6ea0"/>
<rect x="910" y="563" width="7" height="1" fill="#6e6ea0"/>
<text transform="translate(151.4,580) scale(1,1.09)" text-anchor="end" font-size="13" fill="#146414" xml:space="preserve">Chicken</text>
<rect x="183" y="575" width="7" height="1" fill="#6e6ea0"/>
<rect x="183" y="578" width="7" height="1" fill="#6e6ea0"/>
<rect x="249" y="575" width="7" height="1" fill="#6e6ea0"/>
<rect x="249" y="578" width="7" height="1" fill="#6e6ea0"/>
<rect x="315" y="575" width="7" height="1" fill="#6e6ea0"/>
<rect x="315" y="578" width="7" height="1" fill="#6e6ea0"/>
<rect x="381" y="575" width="7" height="1" fill="#6e6ea0"/>
<rect x="381" y="578" width="7" height="1" fill="#6e6ea0"/>
<rect x="447" y="575" width="7" height="1" fill="#6e6ea0"/>
<rect x="447" y="578" width="7" height="1" fill="#6e6ea0"/>
<rect x="513" y="575" width="7" height="1" fill="#6e6ea0"/>
<rect x="513" y="578" width="7" height="1" fill="#6e6ea0"/>
<rect x="579" y="575" width="7" height="1" fill="#6e6ea0"/>
<rect x="579" y="578" width="7" height="1" fill="#6e6ea0"/>
<rect x="646" y="575" width="7" height="1" fill="#6e6ea0"/>
<rect x="646" y="578" width="7" height="1" fill="#6e6ea0"/>
<rect x="712" y="575" width="7" height="1" fill="#6e6ea0"/>
<rect x="712" y="578" width="7" height="1" fill="#6e6ea0"/>
<rect x="778" y="575" width="7" height="1" fill="#6e6ea0"/>
<rect x="778" y="578" width="7" height="1" fill="#6e6ea0"/>
<rect x="844" y="575" width="7" height="1" fill="#6e6ea0"/>
<rect x="844" y="578" width="7" height="1" fill="#6e6ea0"/>
<rect x="910" y="575" width="7" height="1" fill="#6e6ea0"/>
<rect x="910" y="578" width="7" height="1" fill="#6e6ea0"/>
<text transform="translate(151.4,595) scale(1,1.09)" text-anchor="end" font-size="13" fill="#0c0c64" xml:space="preserve">X_tropicalis</text>
<rect x="183" y="590" width="7" height="1" fill="#6e6ea0"/>
<rect x="183" y="593" width="7" height="1" fill="#6e6ea0"/>
<rect x="249" y="590" width="7" height="1" fill="#6e6ea0"/>
<rect x="249" y="593" width="7" height="1" fill="#6e6ea0"/>
<rect x="315" y="590" width="7" height="1" fill="#6e6ea0"/>
<rect x="315" y="593" width="7" height="1" fill="#6e6ea0"/>
<rect x="381" y="590" width="7" height="1" fill="#6e6ea0"/>
<rect x="381" y="593" width="7" height="1" fill="#6e6ea0"/>
<rect x="447" y="590" width="7" height="1" fill="#6e6ea0"/>
<rect x="447" y="593" width="7" height="1" fill="#6e6ea0"/>
<rect x="513" y="590" width="7" height="1" fill="#6e6ea0"/>
<rect x="513" y="593" width="7" height="1" fill="#6e6ea0"/>
<rect x="579" y="590" width="7" height="1" fill="#6e6ea0"/>
<rect x="579" y="593" width="7" height="1" fill="#6e6ea0"/>
<rect x="646" y="590" width="7" height="1" fill="#6e6ea0"/>
<rect x="646" y="593" width="7" height="1" fill="#6e6ea0"/>
<rect x="712" y="590" width="7" height="1" fill="#6e6ea0"/>
<rect x="712" y="593" width="7" height="1" fill="#6e6ea0"/>
<rect x="778" y="590" width="7" height="1" fill="#6e6ea0"/>
<rect x="778" y="593" width="7" height="1" fill="#6e6ea0"/>
<rect x="844" y="590" width="7" height="1" fill="#6e6ea0"/>
<rect x="844" y="593" width="7" height="1" fill="#6e6ea0"/>
<rect x="910" y="590" width="7" height="1" fill="#6e6ea0"/>
<rect x="910" y="593" width="7" height="1" fill="#6e6ea0"/>
<text transform="translate(151.4,610) scale(1,1.09)" text-anchor="end" font-size="13" fill="#146414" xml:space="preserve">Zebrafish</text>
<rect x="183" y="605" width="7" height="1" fill="#6e6ea0"/>
<rect x="183" y="608" width="7" height="1" fill="#6e6ea0"/>
<rect x="249" y="605" width="7" height="1" fill="#6e6ea0"/>
<rect x="249" y="608" width="7" height="1" fill="#6e6ea0"/>
<rect x="315" y="605" width="7" height="1" fill="#6e6ea0"/>
<rect x="315" y="608" width="7" height="1" fill="#6e6ea0"/>
<rect x="381" y="605" width="7" height="1" fill="#6e6ea0"/>
<rect x="381" y="608" width="7" height="1" fill="#6e6ea0"/>
<rect x="447" y="605" width="7" height="1" fill="#6e6ea0"/>
<rect x="447" y="608" width="7" height="1" fill="#6e6ea0"/>
<rect x="513" y="605" width="7" height="1" fill="#6e6ea0"/>
<rect x="513" y="608" width="7" height="1" fill="#6e6ea0"/>
<rect x="579" y="605" width="7" height="1" fill="#6e6ea0"/>
<rect x="579" y="608" width="7" height="1" fill="#6e6ea0"/>
<rect x="646" y="605" width="7" height="1" fill="#6e6ea0"/>
<rect x="646" y="608" width="7" height="1" fill="#6e6ea0"/>
<rect x="712" y="605" width="7" height="1" fill="#6e6ea0"/>
<rect x="712" y="608" width="7" height="1" fill="#6e6ea0"/>
<rect x="778" y="605" width="7" height="1" fill="#6e6ea0"/>
<rect x="778" y="608" width="7" height="1" fill="#6e6ea0"/>
<rect x="844" y="605" width="7" height="1" fill="#6e6ea0"/>
<rect x="844" y="608" width="7" height="1" fill="#6e6ea0"/>
<rect x="910" y="605" width="7" height="1" fill="#6e6ea0"/>
<rect x="910" y="608" width="7" height="1" fill="#6e6ea0"/>
<text transform="translate(552,626) scale(1,1.09)" text-anchor="middle" font-size="13" fill="#000" textLength="223.5" lengthAdjust="spacing" xml:space="preserve">Repeating Elements by RepeatMasker</text>
<text transform="translate(151.4,640) scale(1,1.09)" text-anchor="end" font-size="13" fill="#000" xml:space="preserve">RepeatMasker</text>
</svg>
</body></html>
